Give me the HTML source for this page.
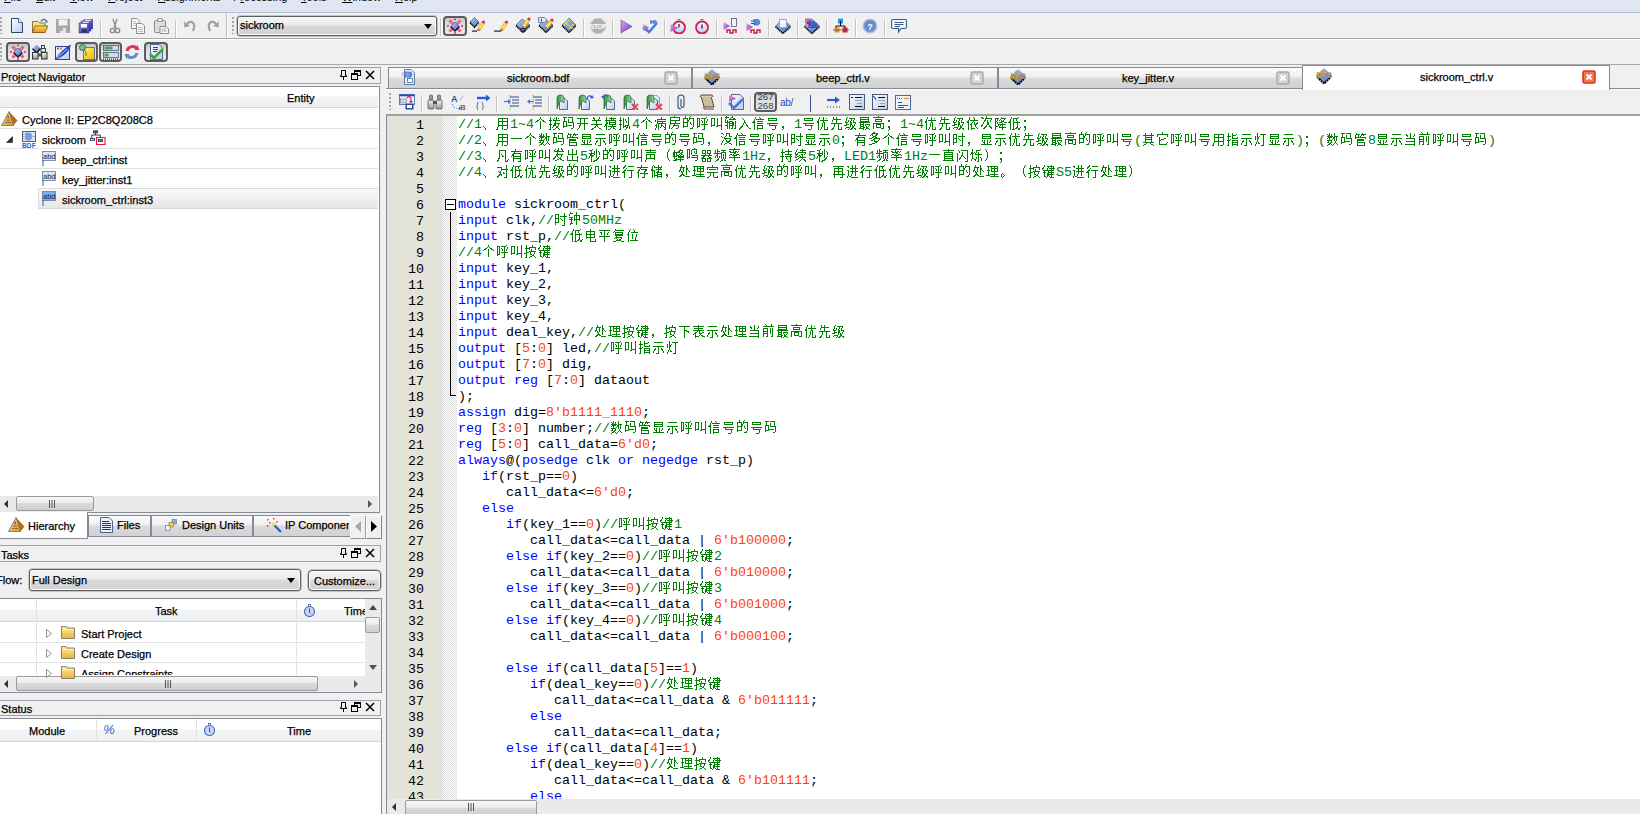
<!DOCTYPE html>
<html><head><meta charset="utf-8"><title>Quartus II - sickroom_ctrl.v</title>
<style>
*{box-sizing:border-box}
html,body{margin:0;padding:0}
body{width:1640px;height:814px;overflow:hidden;position:relative;background:#f0f0f0;font-family:"Liberation Sans",sans-serif;font-size:11px;color:#000}
.a{position:absolute}
.t{position:absolute;white-space:nowrap;line-height:13px;-webkit-text-stroke:.25px #000}
/* menubar */
#menu{left:0;top:0;width:1640px;height:13px;background:linear-gradient(#e3e7f3,#dde3f1);border-bottom:1px solid #b7bfd2}
#menu span{position:absolute;top:-9px;line-height:13px;font-size:11px}
#menu u{text-decoration:underline}
/* toolbars */
.hl{position:absolute;height:1px}
.vl{position:absolute;width:1px}
.sep{position:absolute;width:1px;background:#c5c5c5;border-right:1px solid #fff;width:2px}
.grip{position:absolute;width:2px;background-image:linear-gradient(#a4a4a4 0 2px,transparent 2px);background-size:2px 4px;background-repeat:repeat-y}
.pbtn{position:absolute;border:2px solid #5c5c5c;border-radius:4px;background:linear-gradient(#c8c8c8,#dedede 40%,#e9e9e9)}
.combo{position:absolute;border:1px solid #5e5e5e;box-shadow:inset 0 0 0 1px #fbfbfb,0 0 0 .5px #9a9a9a;border-radius:3px;background:linear-gradient(#f4f4f4 0,#ececec 45%,#d9d9d9 50%,#d2d2d2 100%)}
.arr{position:absolute;width:0;height:0;border-left:4px solid transparent;border-right:4px solid transparent;border-top:5px solid #000}
/* dock header */
.dock{position:absolute;border:1px solid #9da1a8;background:#f0f0f0}
.dicons{position:absolute}
/* tree */
.frame{position:absolute;border:1px solid #858a96;background:#fff}
.hdr{position:absolute;background:linear-gradient(#fff 0,#fff 45%,#f4f5f7 50%,#eceef1 100%);border-bottom:1px solid #d5d5d5}
.rowl{position:absolute;height:1px;background:#e3e3e3}
/* scrollbar */
.hsb{position:absolute;background:#eaeaea}
.thumb{position:absolute;border:1px solid #9a9a9a;border-radius:2px;background:linear-gradient(#f7f7f7 0,#ececec 45%,#dadada 50%,#cfcfcf 100%)}
/* editor */
#gutter{left:387px;top:116px;width:56px;height:683px;background:#e4e3da}
#dots{left:443px;top:116px;width:14px;height:683px;background-color:#fff;background-image:linear-gradient(45deg,#dcdcdc 25%,transparent 25%,transparent 75%,#dcdcdc 75%),linear-gradient(45deg,#dcdcdc 25%,transparent 25%,transparent 75%,#dcdcdc 75%);background-size:2px 2px;background-position:0 0,1px 1px}
#code{left:387px;top:115px;width:1253px;height:684px;overflow:hidden}
.cl{position:absolute;left:71px;height:16px;line-height:16px;white-space:pre;font-family:"Liberation Mono",monospace;font-size:13.333px;color:#000}
.ln{position:absolute;margin-top:1px;left:0;width:37px;text-align:right;height:16px;line-height:16px;font-family:"Liberation Mono",monospace;font-size:13.333px;color:#000}
.cl i{font-style:normal}
.k{color:#0000ff}.n{color:#ff4500}.c{color:#008000}
svg.cj{display:inline-block;width:14px;height:16px;vertical-align:top;fill:currentColor;shape-rendering:crispEdges;overflow:visible}
/* tabs */
.tab{position:absolute;border:1px solid #858a96;border-bottom:none;background:linear-gradient(#fbfbfb 0,#efefef 45%,#dadada 50%,#d2d2d2 100%)}
.tabx{position:absolute;width:14px;height:14px;border:2px solid #a9a9a9;border-radius:3px;background:#d8d8d8}

</style></head><body>
<svg width="0" height="0" style="position:absolute"><defs><symbol id="g3001" overflow="visible" viewBox="0 0 14 16"><path d="M1 9h1v1h-1zM2 10h1v1h-1zM3 11h1v1h-1zM3 12h1v1h-1z"/></symbol><symbol id="g7528" overflow="visible" viewBox="0 0 14 16"><path d="M2 1h10v1h-10zM2 2h1v1h-1zM6 2h1v1h-1zM11 2h1v1h-1zM2 3h1v1h-1zM6 3h1v1h-1zM11 3h1v1h-1zM2 4h10v1h-10zM2 5h1v1h-1zM6 5h1v1h-1zM11 5h1v1h-1zM2 6h1v1h-1zM6 6h1v1h-1zM11 6h1v1h-1zM2 7h1v1h-1zM6 7h1v1h-1zM11 7h1v1h-1zM2 8h10v1h-10zM2 9h1v1h-1zM6 9h1v1h-1zM11 9h1v1h-1zM1 10h1v1h-1zM6 10h1v1h-1zM11 10h1v1h-1zM1 11h1v1h-1zM6 11h1v1h-1zM11 11h1v1h-1zM0 12h2v1h-2zM6 12h1v1h-1zM8 12h3v1h-3z"/></symbol><symbol id="g4e2a" overflow="visible" viewBox="0 0 14 16"><path d="M6 0h1v1h-1zM6 1h1v1h-1zM5 2h1v1h-1zM7 2h1v1h-1zM3 3h2v1h-2zM8 3h2v1h-2zM2 4h2v1h-2zM6 4h1v1h-1zM9 4h2v1h-2zM1 5h1v1h-1zM6 5h1v1h-1zM11 5h1v1h-1zM6 6h1v1h-1zM6 7h1v1h-1zM6 8h1v1h-1zM6 9h1v1h-1zM6 10h1v1h-1zM6 11h1v1h-1z"/></symbol><symbol id="g62e8" overflow="visible" viewBox="0 0 14 16"><path d="M2 0h1v1h-1zM8 0h1v1h-1zM2 1h1v1h-1zM6 1h1v1h-1zM8 1h1v1h-1zM10 1h1v1h-1zM2 2h1v1h-1zM5 2h1v1h-1zM8 2h1v1h-1zM1 3h3v1h-3zM5 3h7v1h-7zM2 4h1v1h-1zM7 4h1v1h-1zM2 5h1v1h-1zM7 5h1v1h-1zM2 6h1v1h-1zM6 6h6v1h-6zM1 7h3v1h-3zM6 7h2v1h-2zM10 7h1v1h-1zM2 8h1v1h-1zM5 8h3v1h-3zM10 8h1v1h-1zM2 9h1v1h-1zM5 9h1v1h-1zM8 9h2v1h-2zM2 10h1v1h-1zM4 10h1v1h-1zM8 10h2v1h-2zM2 11h1v1h-1zM7 11h1v1h-1zM10 11h1v1h-1zM1 12h2v1h-2zM5 12h2v1h-2zM11 12h1v1h-1z"/></symbol><symbol id="g7801" overflow="visible" viewBox="0 0 14 16"><path d="M1 0h4v1h-4zM6 0h5v1h-5zM2 1h1v1h-1zM10 1h1v1h-1zM2 2h1v1h-1zM6 2h1v1h-1zM10 2h1v1h-1zM2 3h1v1h-1zM6 3h1v1h-1zM10 3h1v1h-1zM1 4h4v1h-4zM6 4h1v1h-1zM10 4h1v1h-1zM1 5h1v1h-1zM4 5h1v1h-1zM6 5h6v1h-6zM1 6h1v1h-1zM4 6h1v1h-1zM11 6h1v1h-1zM1 7h1v1h-1zM4 7h1v1h-1zM11 7h1v1h-1zM1 8h1v1h-1zM4 8h6v1h-6zM11 8h1v1h-1zM1 9h4v1h-4zM11 9h1v1h-1zM1 10h1v1h-1zM11 10h1v1h-1zM9 11h2v1h-2z"/></symbol><symbol id="g5f00" overflow="visible" viewBox="0 0 14 16"><path d="M1 1h11v1h-11zM4 2h1v1h-1zM8 2h1v1h-1zM4 3h1v1h-1zM8 3h1v1h-1zM4 4h1v1h-1zM8 4h1v1h-1zM4 5h1v1h-1zM8 5h1v1h-1zM1 6h11v1h-11zM4 7h1v1h-1zM8 7h1v1h-1zM3 8h2v1h-2zM8 8h1v1h-1zM3 9h1v1h-1zM8 9h1v1h-1zM3 10h1v1h-1zM8 10h1v1h-1zM2 11h1v1h-1zM8 11h1v1h-1zM1 12h1v1h-1zM8 12h1v1h-1z"/></symbol><symbol id="g5173" overflow="visible" viewBox="0 0 14 16"><path d="M3 0h1v1h-1zM9 0h1v1h-1zM3 1h2v1h-2zM9 1h1v1h-1zM4 2h1v1h-1zM8 2h1v1h-1zM2 3h9v1h-9zM6 4h1v1h-1zM6 5h1v1h-1zM6 6h1v1h-1zM1 7h11v1h-11zM6 8h2v1h-2zM5 9h1v1h-1zM7 9h1v1h-1zM4 10h2v1h-2zM8 10h1v1h-1zM2 11h2v1h-2zM9 11h2v1h-2zM1 12h2v1h-2zM11 12h1v1h-1z"/></symbol><symbol id="g6a21" overflow="visible" viewBox="0 0 14 16"><path d="M2 0h1v1h-1zM7 0h1v1h-1zM2 1h1v1h-1zM5 1h7v1h-7zM2 2h1v1h-1zM7 2h1v1h-1zM9 2h1v1h-1zM1 3h11v1h-11zM2 4h1v1h-1zM5 4h1v1h-1zM11 4h1v1h-1zM2 5h2v1h-2zM5 5h7v1h-7zM2 6h2v1h-2zM5 6h1v1h-1zM11 6h1v1h-1zM1 7h2v1h-2zM5 7h7v1h-7zM1 8h2v1h-2zM8 8h1v1h-1zM0 9h1v1h-1zM2 9h1v1h-1zM4 9h8v1h-8zM2 10h1v1h-1zM7 10h1v1h-1zM9 10h1v1h-1zM2 11h1v1h-1zM6 11h1v1h-1zM9 11h2v1h-2zM2 12h1v1h-1zM4 12h2v1h-2zM11 12h1v1h-1z"/></symbol><symbol id="g62df" overflow="visible" viewBox="0 0 14 16"><path d="M2 0h1v1h-1zM10 0h1v1h-1zM2 1h1v1h-1zM5 1h1v1h-1zM10 1h1v1h-1zM2 2h1v1h-1zM5 2h1v1h-1zM7 2h1v1h-1zM10 2h1v1h-1zM1 3h3v1h-3zM5 3h1v1h-1zM7 3h1v1h-1zM10 3h1v1h-1zM2 4h1v1h-1zM5 4h1v1h-1zM8 4h1v1h-1zM10 4h1v1h-1zM2 5h1v1h-1zM5 5h1v1h-1zM8 5h1v1h-1zM10 5h1v1h-1zM2 6h1v1h-1zM5 6h1v1h-1zM10 6h1v1h-1zM1 7h3v1h-3zM5 7h1v1h-1zM10 7h1v1h-1zM2 8h1v1h-1zM5 8h1v1h-1zM7 8h4v1h-4zM2 9h1v1h-1zM5 9h3v1h-3zM9 9h1v1h-1zM11 9h1v1h-1zM2 10h1v1h-1zM5 10h1v1h-1zM8 10h2v1h-2zM11 10h1v1h-1zM2 11h1v1h-1zM8 11h1v1h-1zM11 11h1v1h-1zM1 12h2v1h-2zM7 12h1v1h-1z"/></symbol><symbol id="g75c5" overflow="visible" viewBox="0 0 14 16"><path d="M7 0h1v1h-1zM7 1h1v1h-1zM3 2h9v1h-9zM1 3h1v1h-1zM3 3h1v1h-1zM1 4h1v1h-1zM3 4h9v1h-9zM3 5h1v1h-1zM8 5h1v1h-1zM3 6h9v1h-9zM2 7h1v1h-1zM4 7h1v1h-1zM7 7h1v1h-1zM11 7h1v1h-1zM1 8h2v1h-2zM4 8h1v1h-1zM7 8h2v1h-2zM11 8h1v1h-1zM2 9h1v1h-1zM4 9h1v1h-1zM7 9h1v1h-1zM9 9h1v1h-1zM11 9h1v1h-1zM2 10h1v1h-1zM4 10h1v1h-1zM6 10h1v1h-1zM10 10h2v1h-2zM1 11h1v1h-1zM4 11h1v1h-1zM11 11h1v1h-1zM1 12h1v1h-1zM4 12h1v1h-1zM10 12h2v1h-2z"/></symbol><symbol id="g623f" overflow="visible" viewBox="0 0 14 16"><path d="M6 -1h1v1h-1zM2 0h10v1h-10zM2 1h1v1h-1zM11 1h1v1h-1zM2 2h1v1h-1zM11 2h1v1h-1zM2 3h10v1h-10zM2 4h1v1h-1zM7 4h1v1h-1zM2 5h1v1h-1zM7 5h1v1h-1zM2 6h10v1h-10zM2 7h1v1h-1zM6 7h1v1h-1zM1 8h1v1h-1zM5 8h6v1h-6zM1 9h1v1h-1zM5 9h1v1h-1zM10 9h1v1h-1zM1 10h1v1h-1zM4 10h1v1h-1zM10 10h1v1h-1zM1 11h1v1h-1zM3 11h1v1h-1zM8 11h2v1h-2z"/></symbol><symbol id="g7684" overflow="visible" viewBox="0 0 14 16"><path d="M3 -1h1v1h-1zM8 -1h1v1h-1zM3 0h1v1h-1zM7 0h1v1h-1zM1 1h5v1h-5zM7 1h5v1h-5zM1 2h1v1h-1zM5 2h1v1h-1zM7 2h1v1h-1zM11 2h1v1h-1zM1 3h1v1h-1zM5 3h2v1h-2zM11 3h1v1h-1zM1 4h1v1h-1zM5 4h2v1h-2zM11 4h1v1h-1zM1 5h5v1h-5zM8 5h1v1h-1zM11 5h1v1h-1zM1 6h1v1h-1zM5 6h1v1h-1zM8 6h1v1h-1zM11 6h1v1h-1zM1 7h1v1h-1zM5 7h1v1h-1zM9 7h1v1h-1zM11 7h1v1h-1zM1 8h1v1h-1zM5 8h1v1h-1zM11 8h1v1h-1zM1 9h5v1h-5zM11 9h1v1h-1zM1 10h1v1h-1zM10 10h1v1h-1zM8 11h3v1h-3z"/></symbol><symbol id="g547c" overflow="visible" viewBox="0 0 14 16"><path d="M10 0h1v1h-1zM1 1h3v1h-3zM5 1h5v1h-5zM1 2h1v1h-1zM3 2h1v1h-1zM8 2h1v1h-1zM11 2h1v1h-1zM1 3h1v1h-1zM3 3h1v1h-1zM5 3h1v1h-1zM8 3h1v1h-1zM11 3h1v1h-1zM1 4h1v1h-1zM3 4h1v1h-1zM6 4h1v1h-1zM8 4h1v1h-1zM10 4h1v1h-1zM1 5h1v1h-1zM3 5h1v1h-1zM6 5h1v1h-1zM8 5h1v1h-1zM10 5h1v1h-1zM1 6h1v1h-1zM3 6h1v1h-1zM8 6h1v1h-1zM1 7h1v1h-1zM3 7h1v1h-1zM5 7h7v1h-7zM1 8h1v1h-1zM3 8h1v1h-1zM8 8h1v1h-1zM1 9h3v1h-3zM8 9h1v1h-1zM1 10h1v1h-1zM8 10h1v1h-1zM8 11h1v1h-1zM6 12h3v1h-3z"/></symbol><symbol id="g53eb" overflow="visible" viewBox="0 0 14 16"><path d="M11 0h1v1h-1zM1 1h4v1h-4zM7 1h1v1h-1zM11 1h1v1h-1zM1 2h1v1h-1zM4 2h1v1h-1zM7 2h1v1h-1zM11 2h1v1h-1zM1 3h1v1h-1zM4 3h1v1h-1zM7 3h1v1h-1zM11 3h1v1h-1zM1 4h1v1h-1zM4 4h1v1h-1zM7 4h1v1h-1zM11 4h1v1h-1zM1 5h1v1h-1zM4 5h1v1h-1zM7 5h1v1h-1zM11 5h1v1h-1zM1 6h1v1h-1zM4 6h1v1h-1zM7 6h1v1h-1zM11 6h1v1h-1zM1 7h1v1h-1zM4 7h1v1h-1zM7 7h1v1h-1zM11 7h1v1h-1zM1 8h4v1h-4zM7 8h5v1h-5zM1 9h1v1h-1zM6 9h2v1h-2zM11 9h1v1h-1zM11 10h1v1h-1zM11 11h1v1h-1zM11 12h1v1h-1z"/></symbol><symbol id="g8f93" overflow="visible" viewBox="0 0 14 16"><path d="M2 -1h1v1h-1zM8 -1h1v1h-1zM1 0h4v1h-4zM7 0h2v1h-2zM2 1h1v1h-1zM6 1h1v1h-1zM9 1h2v1h-2zM1 2h1v1h-1zM5 2h7v1h-7zM1 3h1v1h-1zM3 3h1v1h-1zM1 4h1v1h-1zM3 4h1v1h-1zM5 4h4v1h-4zM11 4h1v1h-1zM1 5h5v1h-5zM8 5h2v1h-2zM11 5h1v1h-1zM3 6h1v1h-1zM5 6h5v1h-5zM11 6h1v1h-1zM3 7h1v1h-1zM5 7h1v1h-1zM8 7h2v1h-2zM11 7h1v1h-1zM1 8h3v1h-3zM5 8h5v1h-5zM11 8h1v1h-1zM3 9h1v1h-1zM5 9h1v1h-1zM8 9h1v1h-1zM11 9h1v1h-1zM3 10h1v1h-1zM5 10h1v1h-1zM8 10h1v1h-1zM11 10h1v1h-1zM3 11h1v1h-1zM5 11h1v1h-1zM7 11h2v1h-2zM10 11h2v1h-2z"/></symbol><symbol id="g5165" overflow="visible" viewBox="0 0 14 16"><path d="M4 1h1v1h-1zM5 2h1v1h-1zM6 3h1v1h-1zM6 4h1v1h-1zM6 5h2v1h-2zM5 6h1v1h-1zM7 6h1v1h-1zM5 7h1v1h-1zM8 7h1v1h-1zM4 8h1v1h-1zM8 8h2v1h-2zM3 9h2v1h-2zM9 9h1v1h-1zM2 10h2v1h-2zM10 10h1v1h-1zM1 11h2v1h-2zM11 11h2v1h-2zM1 12h1v1h-1z"/></symbol><symbol id="g4fe1" overflow="visible" viewBox="0 0 14 16"><path d="M3 0h1v1h-1zM7 0h1v1h-1zM3 1h1v1h-1zM8 1h1v1h-1zM2 2h1v1h-1zM4 2h8v1h-8zM2 3h1v1h-1zM1 4h2v1h-2zM5 4h6v1h-6zM0 5h3v1h-3zM2 6h1v1h-1zM5 6h6v1h-6zM2 7h1v1h-1zM2 8h1v1h-1zM5 8h6v1h-6zM2 9h1v1h-1zM5 9h1v1h-1zM10 9h1v1h-1zM2 10h1v1h-1zM5 10h1v1h-1zM10 10h1v1h-1zM2 11h1v1h-1zM5 11h6v1h-6zM2 12h1v1h-1zM5 12h1v1h-1z"/></symbol><symbol id="g53f7" overflow="visible" viewBox="0 0 14 16"><path d="M2 1h9v1h-9zM2 2h1v1h-1zM10 2h1v1h-1zM2 3h9v1h-9zM1 6h11v1h-11zM3 7h1v1h-1zM3 8h8v1h-8zM9 9h1v1h-1zM9 10h1v1h-1zM9 11h1v1h-1zM6 12h3v1h-3z"/></symbol><symbol id="gff0c" overflow="visible" viewBox="0 0 14 16"><path d="M2 9h2v1h-2zM2 10h2v1h-2zM3 11h1v1h-1zM2 12h1v1h-1z"/></symbol><symbol id="g4f18" overflow="visible" viewBox="0 0 14 16"><path d="M3 0h1v1h-1zM7 0h1v1h-1zM3 1h1v1h-1zM7 1h1v1h-1zM10 1h1v1h-1zM2 2h1v1h-1zM7 2h1v1h-1zM2 3h1v1h-1zM4 3h8v1h-8zM1 4h2v1h-2zM7 4h1v1h-1zM1 5h2v1h-2zM7 5h2v1h-2zM2 6h1v1h-1zM6 6h1v1h-1zM8 6h1v1h-1zM2 7h1v1h-1zM6 7h1v1h-1zM8 7h1v1h-1zM2 8h1v1h-1zM6 8h1v1h-1zM8 8h1v1h-1zM2 9h1v1h-1zM6 9h1v1h-1zM8 9h1v1h-1zM2 10h1v1h-1zM5 10h1v1h-1zM8 10h1v1h-1zM11 10h1v1h-1zM2 11h1v1h-1zM5 11h1v1h-1zM8 11h1v1h-1zM11 11h1v1h-1zM2 12h1v1h-1zM4 12h1v1h-1zM8 12h4v1h-4z"/></symbol><symbol id="g5148" overflow="visible" viewBox="0 0 14 16"><path d="M3 0h1v1h-1zM6 0h1v1h-1zM3 1h1v1h-1zM6 1h1v1h-1zM3 2h8v1h-8zM2 3h1v1h-1zM6 3h1v1h-1zM2 4h1v1h-1zM6 4h1v1h-1zM6 5h1v1h-1zM1 6h11v1h-11zM4 7h1v1h-1zM8 7h1v1h-1zM4 8h1v1h-1zM8 8h1v1h-1zM4 9h1v1h-1zM8 9h1v1h-1zM3 10h1v1h-1zM8 10h1v1h-1zM11 10h1v1h-1zM2 11h2v1h-2zM8 11h1v1h-1zM11 11h1v1h-1zM1 12h2v1h-2zM8 12h4v1h-4z"/></symbol><symbol id="g7ea7" overflow="visible" viewBox="0 0 14 16"><path d="M3 0h1v1h-1zM2 1h1v1h-1zM5 1h6v1h-6zM2 2h1v1h-1zM7 2h1v1h-1zM10 2h1v1h-1zM2 3h1v1h-1zM4 3h1v1h-1zM7 3h1v1h-1zM9 3h1v1h-1zM1 4h1v1h-1zM4 4h1v1h-1zM6 4h1v1h-1zM9 4h1v1h-1zM1 5h3v1h-3zM6 5h2v1h-2zM9 5h3v1h-3zM2 6h1v1h-1zM6 6h2v1h-2zM11 6h1v1h-1zM2 7h3v1h-3zM6 7h2v1h-2zM10 7h1v1h-1zM0 8h3v1h-3zM6 8h1v1h-1zM8 8h1v1h-1zM10 8h1v1h-1zM6 9h1v1h-1zM8 9h2v1h-2zM2 10h4v1h-4zM8 10h2v1h-2zM1 11h1v1h-1zM5 11h1v1h-1zM7 11h2v1h-2zM10 11h2v1h-2zM4 12h1v1h-1zM6 12h2v1h-2zM11 12h1v1h-1z"/></symbol><symbol id="g6700" overflow="visible" viewBox="0 0 14 16"><path d="M2 0h9v1h-9zM2 1h1v1h-1zM10 1h1v1h-1zM2 2h9v1h-9zM2 3h1v1h-1zM10 3h1v1h-1zM2 4h9v1h-9zM1 5h11v1h-11zM2 6h1v1h-1zM5 6h1v1h-1zM2 7h4v1h-4zM7 7h5v1h-5zM2 8h1v1h-1zM5 8h1v1h-1zM7 8h1v1h-1zM11 8h1v1h-1zM2 9h4v1h-4zM8 9h1v1h-1zM10 9h1v1h-1zM2 10h1v1h-1zM5 10h2v1h-2zM8 10h2v1h-2zM1 11h5v1h-5zM8 11h3v1h-3zM5 12h1v1h-1zM7 12h1v1h-1zM11 12h1v1h-1z"/></symbol><symbol id="g9ad8" overflow="visible" viewBox="0 0 14 16"><path d="M6 -1h1v1h-1zM1 0h11v1h-11zM3 2h7v1h-7zM3 3h1v1h-1zM9 3h1v1h-1zM3 4h7v1h-7zM1 6h11v1h-11zM1 7h1v1h-1zM4 7h5v1h-5zM11 7h1v1h-1zM1 8h1v1h-1zM4 8h1v1h-1zM8 8h1v1h-1zM11 8h1v1h-1zM1 9h1v1h-1zM4 9h1v1h-1zM8 9h1v1h-1zM11 9h1v1h-1zM1 10h1v1h-1zM4 10h5v1h-5zM11 10h1v1h-1zM1 11h1v1h-1zM9 11h3v1h-3z"/></symbol><symbol id="gff1b" overflow="visible" viewBox="0 0 14 16"><path d="M2 3h2v1h-2zM2 4h2v1h-2zM2 9h2v1h-2zM2 10h2v1h-2zM3 11h1v1h-1zM3 12h1v1h-1zM2 13h1v1h-1z"/></symbol><symbol id="g4f9d" overflow="visible" viewBox="0 0 14 16"><path d="M3 0h1v1h-1zM7 0h1v1h-1zM3 1h1v1h-1zM8 1h1v1h-1zM3 2h1v1h-1zM8 2h1v1h-1zM2 3h1v1h-1zM4 3h8v1h-8zM1 4h2v1h-2zM7 4h1v1h-1zM1 5h2v1h-2zM6 5h1v1h-1zM8 5h1v1h-1zM11 5h1v1h-1zM2 6h1v1h-1zM5 6h1v1h-1zM8 6h1v1h-1zM10 6h2v1h-2zM2 7h1v1h-1zM4 7h2v1h-2zM8 7h3v1h-3zM2 8h1v1h-1zM5 8h1v1h-1zM9 8h1v1h-1zM2 9h1v1h-1zM5 9h1v1h-1zM9 9h1v1h-1zM2 10h1v1h-1zM5 10h1v1h-1zM10 10h1v1h-1zM2 11h1v1h-1zM5 11h4v1h-4zM11 11h1v1h-1zM2 12h1v1h-1zM5 12h1v1h-1z"/></symbol><symbol id="g6b21" overflow="visible" viewBox="0 0 14 16"><path d="M6 -1h1v1h-1zM1 0h2v1h-2zM6 0h1v1h-1zM2 1h2v1h-2zM5 1h7v1h-7zM5 2h1v1h-1zM11 2h1v1h-1zM4 3h2v1h-2zM7 3h1v1h-1zM10 3h1v1h-1zM4 4h1v1h-1zM7 4h1v1h-1zM10 4h1v1h-1zM3 5h1v1h-1zM7 5h2v1h-2zM3 6h1v1h-1zM7 6h2v1h-2zM2 7h1v1h-1zM7 7h2v1h-2zM1 8h2v1h-2zM6 8h1v1h-1zM9 8h1v1h-1zM1 9h1v1h-1zM5 9h2v1h-2zM9 9h2v1h-2zM4 10h2v1h-2zM10 10h2v1h-2zM3 11h2v1h-2zM11 11h1v1h-1z"/></symbol><symbol id="g964d" overflow="visible" viewBox="0 0 14 16"><path d="M7 0h1v1h-1zM1 1h4v1h-4zM7 1h5v1h-5zM1 2h1v1h-1zM3 2h1v1h-1zM6 2h1v1h-1zM10 2h1v1h-1zM1 3h1v1h-1zM3 3h1v1h-1zM5 3h1v1h-1zM7 3h1v1h-1zM9 3h1v1h-1zM1 4h2v1h-2zM7 4h3v1h-3zM1 5h1v1h-1zM3 5h1v1h-1zM5 5h3v1h-3zM10 5h3v1h-3zM1 6h1v1h-1zM3 6h1v1h-1zM8 6h1v1h-1zM1 7h1v1h-1zM4 7h8v1h-8zM1 8h1v1h-1zM4 8h1v1h-1zM6 8h1v1h-1zM8 8h1v1h-1zM1 9h3v1h-3zM5 9h1v1h-1zM8 9h1v1h-1zM1 10h1v1h-1zM5 10h7v1h-7zM1 11h1v1h-1zM8 11h1v1h-1zM1 12h1v1h-1zM8 12h1v1h-1z"/></symbol><symbol id="g4f4e" overflow="visible" viewBox="0 0 14 16"><path d="M3 0h1v1h-1zM10 0h1v1h-1zM3 1h1v1h-1zM5 1h5v1h-5zM2 2h1v1h-1zM5 2h1v1h-1zM8 2h1v1h-1zM2 3h1v1h-1zM5 3h1v1h-1zM8 3h1v1h-1zM1 4h2v1h-2zM5 4h1v1h-1zM9 4h1v1h-1zM0 5h3v1h-3zM5 5h7v1h-7zM2 6h1v1h-1zM5 6h1v1h-1zM9 6h1v1h-1zM2 7h1v1h-1zM5 7h1v1h-1zM9 7h1v1h-1zM2 8h1v1h-1zM5 8h1v1h-1zM9 8h1v1h-1zM2 9h1v1h-1zM5 9h1v1h-1zM9 9h1v1h-1zM2 10h1v1h-1zM5 10h1v1h-1zM8 10h2v1h-2zM12 10h1v1h-1zM2 11h1v1h-1zM5 11h1v1h-1zM7 11h2v1h-2zM10 11h2v1h-2zM2 12h1v1h-1zM4 12h3v1h-3zM10 12h2v1h-2z"/></symbol><symbol id="g4e00" overflow="visible" viewBox="0 0 14 16"><path d="M1 5h11v1h-11z"/></symbol><symbol id="g6570" overflow="visible" viewBox="0 0 14 16"><path d="M3 0h1v1h-1zM8 0h1v1h-1zM1 1h1v1h-1zM3 1h1v1h-1zM5 1h1v1h-1zM8 1h1v1h-1zM2 2h2v1h-2zM5 2h1v1h-1zM8 2h1v1h-1zM1 3h6v1h-6zM8 3h4v1h-4zM2 4h4v1h-4zM7 4h2v1h-2zM10 4h1v1h-1zM1 5h1v1h-1zM3 5h1v1h-1zM7 5h2v1h-2zM10 5h1v1h-1zM3 6h1v1h-1zM6 6h1v1h-1zM8 6h1v1h-1zM10 6h1v1h-1zM1 7h5v1h-5zM8 7h1v1h-1zM10 7h1v1h-1zM2 8h1v1h-1zM5 8h1v1h-1zM9 8h1v1h-1zM1 9h2v1h-2zM4 9h2v1h-2zM9 9h1v1h-1zM3 10h2v1h-2zM8 10h1v1h-1zM10 10h1v1h-1zM2 11h2v1h-2zM5 11h1v1h-1zM7 11h1v1h-1zM11 11h1v1h-1zM1 12h1v1h-1zM6 12h1v1h-1z"/></symbol><symbol id="g7ba1" overflow="visible" viewBox="0 0 14 16"><path d="M2 0h1v1h-1zM8 0h1v1h-1zM2 1h4v1h-4zM7 1h5v1h-5zM1 2h1v1h-1zM4 2h1v1h-1zM7 2h1v1h-1zM9 2h1v1h-1zM1 3h1v1h-1zM4 3h1v1h-1zM6 3h1v1h-1zM1 4h11v1h-11zM1 5h1v1h-1zM11 5h1v1h-1zM3 6h7v1h-7zM3 7h7v1h-7zM3 8h1v1h-1zM3 9h8v1h-8zM3 10h1v1h-1zM10 10h1v1h-1zM3 11h1v1h-1zM10 11h1v1h-1zM3 12h8v1h-8z"/></symbol><symbol id="g663e" overflow="visible" viewBox="0 0 14 16"><path d="M2 1h9v1h-9zM2 2h1v1h-1zM10 2h1v1h-1zM2 3h9v1h-9zM2 4h1v1h-1zM10 4h1v1h-1zM2 5h9v1h-9zM2 7h1v1h-1zM4 7h1v1h-1zM7 7h1v1h-1zM10 7h1v1h-1zM2 8h1v1h-1zM4 8h1v1h-1zM7 8h1v1h-1zM10 8h1v1h-1zM3 9h2v1h-2zM7 9h1v1h-1zM9 9h1v1h-1zM4 10h1v1h-1zM7 10h1v1h-1zM1 11h11v1h-11z"/></symbol><symbol id="g793a" overflow="visible" viewBox="0 0 14 16"><path d="M2 1h9v1h-9zM1 5h11v1h-11zM6 6h1v1h-1zM3 7h1v1h-1zM6 7h1v1h-1zM9 7h1v1h-1zM2 8h2v1h-2zM6 8h1v1h-1zM9 8h2v1h-2zM2 9h1v1h-1zM6 9h1v1h-1zM10 9h1v1h-1zM1 10h1v1h-1zM6 10h1v1h-1zM11 10h1v1h-1zM1 11h1v1h-1zM6 11h1v1h-1zM11 11h1v1h-1zM4 12h3v1h-3z"/></symbol><symbol id="g6ca1" overflow="visible" viewBox="0 0 14 16"><path d="M1 0h2v1h-2zM6 0h4v1h-4zM3 1h1v1h-1zM6 1h1v1h-1zM9 1h1v1h-1zM6 2h1v1h-1zM9 2h1v1h-1zM1 3h1v1h-1zM5 3h1v1h-1zM9 3h3v1h-3zM2 4h1v1h-1zM4 4h1v1h-1zM4 5h7v1h-7zM5 6h1v1h-1zM10 6h1v1h-1zM3 7h1v1h-1zM6 7h1v1h-1zM9 7h2v1h-2zM2 8h1v1h-1zM6 8h4v1h-4zM2 9h1v1h-1zM7 9h2v1h-2zM1 10h1v1h-1zM5 10h2v1h-2zM9 10h2v1h-2zM1 11h1v1h-1zM4 11h1v1h-1zM11 11h1v1h-1z"/></symbol><symbol id="g65f6" overflow="visible" viewBox="0 0 14 16"><path d="M10 0h1v1h-1zM1 1h4v1h-4zM10 1h1v1h-1zM1 2h1v1h-1zM4 2h1v1h-1zM10 2h1v1h-1zM1 3h1v1h-1zM4 3h1v1h-1zM6 3h7v1h-7zM1 4h1v1h-1zM4 4h1v1h-1zM10 4h1v1h-1zM1 5h4v1h-4zM6 5h1v1h-1zM10 5h1v1h-1zM1 6h1v1h-1zM4 6h1v1h-1zM7 6h1v1h-1zM10 6h1v1h-1zM1 7h1v1h-1zM4 7h1v1h-1zM8 7h1v1h-1zM10 7h1v1h-1zM1 8h1v1h-1zM4 8h1v1h-1zM10 8h1v1h-1zM1 9h4v1h-4zM10 9h1v1h-1zM1 10h1v1h-1zM10 10h1v1h-1zM1 11h1v1h-1zM10 11h1v1h-1zM8 12h3v1h-3z"/></symbol><symbol id="g6709" overflow="visible" viewBox="0 0 14 16"><path d="M5 0h1v1h-1zM5 1h1v1h-1zM1 2h11v1h-11zM4 3h1v1h-1zM3 4h8v1h-8zM2 5h2v1h-2zM10 5h1v1h-1zM2 6h2v1h-2zM10 6h1v1h-1zM1 7h1v1h-1zM3 7h8v1h-8zM3 8h1v1h-1zM10 8h1v1h-1zM3 9h8v1h-8zM3 10h1v1h-1zM10 10h1v1h-1zM3 11h1v1h-1zM10 11h1v1h-1zM3 12h1v1h-1zM8 12h3v1h-3z"/></symbol><symbol id="g591a" overflow="visible" viewBox="0 0 14 16"><path d="M5 -1h2v1h-2zM4 0h6v1h-6zM3 1h2v1h-2zM8 1h2v1h-2zM2 2h1v1h-1zM4 2h1v1h-1zM7 2h2v1h-2zM5 3h3v1h-3zM4 4h2v1h-2zM7 4h2v1h-2zM1 5h3v1h-3zM6 5h6v1h-6zM5 6h2v1h-2zM11 6h1v1h-1zM3 7h2v1h-2zM6 7h1v1h-1zM10 7h1v1h-1zM6 8h4v1h-4zM7 9h2v1h-2zM4 10h3v1h-3zM1 11h3v1h-3z"/></symbol><symbol id="g5176" overflow="visible" viewBox="0 0 14 16"><path d="M3 0h1v1h-1zM9 0h1v1h-1zM3 1h1v1h-1zM9 1h1v1h-1zM1 2h11v1h-11zM3 3h1v1h-1zM9 3h1v1h-1zM3 4h7v1h-7zM3 5h1v1h-1zM9 5h1v1h-1zM3 6h7v1h-7zM3 7h1v1h-1zM9 7h1v1h-1zM3 8h1v1h-1zM9 8h1v1h-1zM1 9h11v1h-11zM4 10h1v1h-1zM8 10h1v1h-1zM2 11h2v1h-2zM9 11h2v1h-2zM1 12h1v1h-1zM11 12h1v1h-1z"/></symbol><symbol id="g5b83" overflow="visible" viewBox="0 0 14 16"><path d="M6 -1h1v1h-1zM6 0h1v1h-1zM1 1h11v1h-11zM1 2h1v1h-1zM11 2h1v1h-1zM1 3h1v1h-1zM11 3h1v1h-1zM3 4h1v1h-1zM3 5h1v1h-1zM8 5h2v1h-2zM3 6h1v1h-1zM5 6h3v1h-3zM3 7h2v1h-2zM3 8h1v1h-1zM3 9h1v1h-1zM11 9h1v1h-1zM3 10h1v1h-1zM10 10h1v1h-1zM3 11h8v1h-8z"/></symbol><symbol id="g6307" overflow="visible" viewBox="0 0 14 16"><path d="M2 0h1v1h-1zM6 0h1v1h-1zM2 1h1v1h-1zM6 1h1v1h-1zM10 1h1v1h-1zM2 2h1v1h-1zM6 2h4v1h-4zM1 3h4v1h-4zM6 3h1v1h-1zM2 4h1v1h-1zM6 4h1v1h-1zM11 4h1v1h-1zM2 5h1v1h-1zM6 5h6v1h-6zM2 6h1v1h-1zM4 6h1v1h-1zM1 7h3v1h-3zM6 7h6v1h-6zM2 8h1v1h-1zM6 8h1v1h-1zM11 8h1v1h-1zM2 9h1v1h-1zM6 9h6v1h-6zM2 10h1v1h-1zM6 10h1v1h-1zM11 10h1v1h-1zM2 11h1v1h-1zM6 11h6v1h-6zM1 12h2v1h-2zM6 12h1v1h-1zM11 12h1v1h-1z"/></symbol><symbol id="g706f" overflow="visible" viewBox="0 0 14 16"><path d="M3 0h1v1h-1zM3 1h1v1h-1zM6 1h6v1h-6zM3 2h1v1h-1zM9 2h1v1h-1zM1 3h1v1h-1zM3 3h1v1h-1zM5 3h1v1h-1zM9 3h1v1h-1zM1 4h1v1h-1zM3 4h2v1h-2zM9 4h1v1h-1zM1 5h1v1h-1zM3 5h2v1h-2zM9 5h1v1h-1zM1 6h1v1h-1zM3 6h1v1h-1zM9 6h1v1h-1zM3 7h1v1h-1zM9 7h1v1h-1zM3 8h1v1h-1zM9 8h1v1h-1zM2 9h1v1h-1zM4 9h1v1h-1zM9 9h1v1h-1zM2 10h1v1h-1zM4 10h2v1h-2zM9 10h1v1h-1zM1 11h1v1h-1zM9 11h1v1h-1zM1 12h1v1h-1zM7 12h3v1h-3z"/></symbol><symbol id="g5f53" overflow="visible" viewBox="0 0 14 16"><path d="M6 0h1v1h-1zM2 1h1v1h-1zM6 1h1v1h-1zM10 1h1v1h-1zM2 2h2v1h-2zM6 2h1v1h-1zM10 2h1v1h-1zM3 3h1v1h-1zM6 3h1v1h-1zM9 3h1v1h-1zM6 4h1v1h-1zM2 5h9v1h-9zM10 6h1v1h-1zM10 7h1v1h-1zM2 8h9v1h-9zM10 9h1v1h-1zM10 10h1v1h-1zM1 11h10v1h-10zM10 12h1v1h-1z"/></symbol><symbol id="g524d" overflow="visible" viewBox="0 0 14 16"><path d="M3 -1h1v1h-1zM9 -1h1v1h-1zM4 0h1v1h-1zM9 0h1v1h-1zM1 1h11v1h-11zM1 3h5v1h-5zM8 3h1v1h-1zM10 3h1v1h-1zM1 4h1v1h-1zM5 4h1v1h-1zM8 4h1v1h-1zM10 4h1v1h-1zM1 5h1v1h-1zM5 5h1v1h-1zM8 5h1v1h-1zM10 5h1v1h-1zM1 6h5v1h-5zM8 6h1v1h-1zM10 6h1v1h-1zM1 7h1v1h-1zM5 7h1v1h-1zM8 7h1v1h-1zM10 7h1v1h-1zM1 8h5v1h-5zM8 8h1v1h-1zM10 8h1v1h-1zM1 9h1v1h-1zM5 9h1v1h-1zM10 9h1v1h-1zM1 10h1v1h-1zM5 10h1v1h-1zM10 10h1v1h-1zM1 11h1v1h-1zM4 11h2v1h-2zM9 11h2v1h-2z"/></symbol><symbol id="g51e1" overflow="visible" viewBox="0 0 14 16"><path d="M3 1h7v1h-7zM3 2h1v1h-1zM9 2h1v1h-1zM3 3h1v1h-1zM9 3h1v1h-1zM3 4h1v1h-1zM9 4h1v1h-1zM3 5h1v1h-1zM5 5h1v1h-1zM9 5h1v1h-1zM3 6h1v1h-1zM6 6h1v1h-1zM9 6h1v1h-1zM3 7h1v1h-1zM6 7h2v1h-2zM9 7h1v1h-1zM3 8h1v1h-1zM9 8h1v1h-1zM2 9h2v1h-2zM9 9h1v1h-1zM2 10h1v1h-1zM9 10h1v1h-1zM12 10h1v1h-1zM1 11h2v1h-2zM9 11h1v1h-1zM11 11h1v1h-1zM1 12h1v1h-1zM9 12h3v1h-3z"/></symbol><symbol id="g53d1" overflow="visible" viewBox="0 0 14 16"><path d="M6 -1h1v1h-1zM9 -1h1v1h-1zM3 0h1v1h-1zM6 0h1v1h-1zM9 0h2v1h-2zM2 1h1v1h-1zM5 1h2v1h-2zM10 1h1v1h-1zM2 2h10v1h-10zM5 3h1v1h-1zM5 4h1v1h-1zM4 5h7v1h-7zM4 6h2v1h-2zM9 6h1v1h-1zM3 7h1v1h-1zM5 7h1v1h-1zM9 7h1v1h-1zM2 8h2v1h-2zM6 8h1v1h-1zM8 8h1v1h-1zM1 9h2v1h-2zM7 9h2v1h-2zM1 10h1v1h-1zM5 10h2v1h-2zM8 10h2v1h-2zM3 11h2v1h-2zM10 11h2v1h-2z"/></symbol><symbol id="g51fa" overflow="visible" viewBox="0 0 14 16"><path d="M6 0h1v1h-1zM2 1h1v1h-1zM6 1h1v1h-1zM10 1h1v1h-1zM2 2h1v1h-1zM6 2h1v1h-1zM10 2h1v1h-1zM2 3h1v1h-1zM6 3h1v1h-1zM10 3h1v1h-1zM2 4h1v1h-1zM6 4h1v1h-1zM10 4h1v1h-1zM2 5h9v1h-9zM6 6h1v1h-1zM1 7h1v1h-1zM6 7h1v1h-1zM11 7h1v1h-1zM1 8h1v1h-1zM6 8h1v1h-1zM11 8h1v1h-1zM1 9h1v1h-1zM6 9h1v1h-1zM11 9h1v1h-1zM1 10h1v1h-1zM6 10h1v1h-1zM11 10h1v1h-1zM1 11h11v1h-11zM11 12h1v1h-1z"/></symbol><symbol id="g79d2" overflow="visible" viewBox="0 0 14 16"><path d="M4 0h1v1h-1zM8 0h1v1h-1zM1 1h3v1h-3zM8 1h1v1h-1zM3 2h1v1h-1zM6 2h1v1h-1zM8 2h1v1h-1zM10 2h1v1h-1zM3 3h1v1h-1zM6 3h1v1h-1zM8 3h1v1h-1zM11 3h1v1h-1zM1 4h6v1h-6zM8 4h1v1h-1zM11 4h1v1h-1zM2 5h2v1h-2zM6 5h1v1h-1zM8 5h1v1h-1zM11 5h1v1h-1zM2 6h4v1h-4zM8 6h1v1h-1zM1 7h1v1h-1zM3 7h2v1h-2zM8 7h1v1h-1zM11 7h1v1h-1zM1 8h1v1h-1zM3 8h1v1h-1zM8 8h1v1h-1zM10 8h1v1h-1zM0 9h1v1h-1zM3 9h1v1h-1zM9 9h2v1h-2zM3 10h1v1h-1zM8 10h2v1h-2zM3 11h1v1h-1zM6 11h3v1h-3zM3 12h1v1h-1zM5 12h2v1h-2z"/></symbol><symbol id="g58f0" overflow="visible" viewBox="0 0 14 16"><path d="M6 0h1v1h-1zM1 1h11v1h-11zM6 2h1v1h-1zM2 3h10v1h-10zM2 5h9v1h-9zM2 6h1v1h-1zM6 6h1v1h-1zM10 6h1v1h-1zM2 7h1v1h-1zM6 7h1v1h-1zM10 7h1v1h-1zM2 8h1v1h-1zM6 8h1v1h-1zM10 8h1v1h-1zM2 9h9v1h-9zM2 10h1v1h-1zM10 10h1v1h-1zM1 11h1v1h-1zM1 12h1v1h-1z"/></symbol><symbol id="gff08" overflow="visible" viewBox="0 0 14 16"><path d="M11 0h1v1h-1zM10 1h1v1h-1zM10 2h1v1h-1zM9 3h1v1h-1zM9 4h1v1h-1zM9 5h1v1h-1zM9 6h1v1h-1zM9 7h1v1h-1zM9 8h1v1h-1zM10 9h1v1h-1zM10 10h1v1h-1zM11 11h1v1h-1z"/></symbol><symbol id="g8702" overflow="visible" viewBox="0 0 14 16"><path d="M8 0h1v1h-1zM2 1h1v1h-1zM7 1h4v1h-4zM2 2h1v1h-1zM6 2h2v1h-2zM10 2h1v1h-1zM1 3h7v1h-7zM9 3h2v1h-2zM1 4h2v1h-2zM4 4h1v1h-1zM8 4h2v1h-2zM1 5h2v1h-2zM4 5h1v1h-1zM7 5h1v1h-1zM9 5h2v1h-2zM1 6h2v1h-2zM4 6h3v1h-3zM8 6h1v1h-1zM11 6h1v1h-1zM1 7h4v1h-4zM6 7h6v1h-6zM2 8h1v1h-1zM6 8h6v1h-6zM2 9h1v1h-1zM4 9h1v1h-1zM8 9h1v1h-1zM3 10h9v1h-9zM1 11h4v1h-4zM8 11h1v1h-1zM8 12h1v1h-1z"/></symbol><symbol id="g9e23" overflow="visible" viewBox="0 0 14 16"><path d="M8 -1h1v1h-1zM1 0h3v1h-3zM6 0h5v1h-5zM1 1h1v1h-1zM3 1h1v1h-1zM5 1h1v1h-1zM10 1h1v1h-1zM1 2h1v1h-1zM3 2h1v1h-1zM5 2h1v1h-1zM8 2h1v1h-1zM10 2h1v1h-1zM1 3h1v1h-1zM3 3h1v1h-1zM5 3h1v1h-1zM8 3h1v1h-1zM10 3h1v1h-1zM1 4h1v1h-1zM3 4h1v1h-1zM5 4h1v1h-1zM9 4h2v1h-2zM1 5h1v1h-1zM3 5h1v1h-1zM5 5h1v1h-1zM1 6h1v1h-1zM3 6h1v1h-1zM6 6h6v1h-6zM1 7h1v1h-1zM3 7h1v1h-1zM11 7h1v1h-1zM1 8h3v1h-3zM5 8h7v1h-7zM1 9h1v1h-1zM11 9h1v1h-1zM11 10h1v1h-1zM9 11h2v1h-2z"/></symbol><symbol id="g5668" overflow="visible" viewBox="0 0 14 16"><path d="M2 1h4v1h-4zM7 1h4v1h-4zM2 2h1v1h-1zM5 2h1v1h-1zM7 2h1v1h-1zM10 2h1v1h-1zM2 3h1v1h-1zM5 3h1v1h-1zM7 3h1v1h-1zM10 3h1v1h-1zM2 4h4v1h-4zM7 4h4v1h-4zM5 5h1v1h-1zM9 5h1v1h-1zM1 6h11v1h-11zM3 7h2v1h-2zM8 7h1v1h-1zM2 8h2v1h-2zM9 8h2v1h-2zM1 9h5v1h-5zM7 9h5v1h-5zM2 10h1v1h-1zM5 10h1v1h-1zM7 10h1v1h-1zM10 10h1v1h-1zM2 11h1v1h-1zM5 11h1v1h-1zM7 11h1v1h-1zM10 11h1v1h-1zM2 12h4v1h-4zM7 12h4v1h-4z"/></symbol><symbol id="g9891" overflow="visible" viewBox="0 0 14 16"><path d="M3 0h1v1h-1zM1 1h1v1h-1zM3 1h1v1h-1zM7 1h5v1h-5zM1 2h1v1h-1zM3 2h3v1h-3zM9 2h1v1h-1zM1 3h1v1h-1zM3 3h1v1h-1zM7 3h5v1h-5zM0 4h8v1h-8zM11 4h1v1h-1zM3 5h1v1h-1zM7 5h1v1h-1zM9 5h1v1h-1zM11 5h1v1h-1zM2 6h2v1h-2zM7 6h1v1h-1zM9 6h1v1h-1zM11 6h1v1h-1zM1 7h1v1h-1zM3 7h1v1h-1zM5 7h1v1h-1zM7 7h1v1h-1zM9 7h1v1h-1zM11 7h1v1h-1zM1 8h1v1h-1zM3 8h1v1h-1zM5 8h1v1h-1zM7 8h1v1h-1zM9 8h1v1h-1zM11 8h1v1h-1zM4 9h1v1h-1zM7 9h1v1h-1zM9 9h1v1h-1zM11 9h1v1h-1zM3 10h2v1h-2zM8 10h1v1h-1zM10 10h1v1h-1zM2 11h2v1h-2zM7 11h2v1h-2zM10 11h2v1h-2zM1 12h1v1h-1zM6 12h1v1h-1z"/></symbol><symbol id="g7387" overflow="visible" viewBox="0 0 14 16"><path d="M6 -1h1v1h-1zM1 0h11v1h-11zM5 1h1v1h-1zM1 2h2v1h-2zM5 2h1v1h-1zM7 2h2v1h-2zM10 2h1v1h-1zM2 3h6v1h-6zM9 3h1v1h-1zM6 4h2v1h-2zM2 5h2v1h-2zM5 5h1v1h-1zM8 5h3v1h-3zM1 6h1v1h-1zM4 6h5v1h-5zM11 6h1v1h-1zM6 7h1v1h-1zM1 8h11v1h-11zM6 9h1v1h-1zM6 10h1v1h-1zM6 11h1v1h-1z"/></symbol><symbol id="g6301" overflow="visible" viewBox="0 0 14 16"><path d="M2 0h1v1h-1zM8 0h1v1h-1zM2 1h1v1h-1zM8 1h1v1h-1zM2 2h1v1h-1zM5 2h7v1h-7zM1 3h4v1h-4zM8 3h1v1h-1zM2 4h1v1h-1zM8 4h1v1h-1zM2 5h1v1h-1zM5 5h7v1h-7zM2 6h1v1h-1zM10 6h1v1h-1zM0 7h4v1h-4zM5 7h7v1h-7zM2 8h1v1h-1zM6 8h1v1h-1zM10 8h1v1h-1zM2 9h1v1h-1zM6 9h1v1h-1zM10 9h1v1h-1zM2 10h1v1h-1zM7 10h1v1h-1zM10 10h1v1h-1zM2 11h1v1h-1zM10 11h1v1h-1zM1 12h2v1h-2zM8 12h3v1h-3z"/></symbol><symbol id="g7eed" overflow="visible" viewBox="0 0 14 16"><path d="M3 0h1v1h-1zM8 0h1v1h-1zM2 1h1v1h-1zM6 1h6v1h-6zM2 2h1v1h-1zM8 2h1v1h-1zM1 3h1v1h-1zM4 3h8v1h-8zM1 4h1v1h-1zM3 4h1v1h-1zM11 4h1v1h-1zM1 5h3v1h-3zM7 5h2v1h-2zM10 5h1v1h-1zM2 6h1v1h-1zM5 6h1v1h-1zM8 6h1v1h-1zM1 7h1v1h-1zM3 7h2v1h-2zM6 7h1v1h-1zM8 7h1v1h-1zM1 8h2v1h-2zM5 8h7v1h-7zM4 9h1v1h-1zM8 9h1v1h-1zM2 10h2v1h-2zM7 10h1v1h-1zM9 10h2v1h-2zM1 11h1v1h-1zM6 11h1v1h-1zM10 11h2v1h-2zM5 12h1v1h-1zM11 12h1v1h-1z"/></symbol><symbol id="g76f4" overflow="visible" viewBox="0 0 14 16"><path d="M6 0h1v1h-1zM1 1h11v1h-11zM6 2h1v1h-1zM2 3h9v1h-9zM2 4h1v1h-1zM10 4h1v1h-1zM2 5h9v1h-9zM2 6h1v1h-1zM10 6h1v1h-1zM2 7h9v1h-9zM2 8h1v1h-1zM10 8h1v1h-1zM2 9h9v1h-9zM2 10h1v1h-1zM10 10h1v1h-1zM1 11h11v1h-11z"/></symbol><symbol id="g95ea" overflow="visible" viewBox="0 0 14 16"><path d="M2 1h1v1h-1zM5 1h7v1h-7zM3 2h1v1h-1zM11 2h1v1h-1zM3 3h1v1h-1zM6 3h1v1h-1zM11 3h1v1h-1zM1 4h1v1h-1zM6 4h1v1h-1zM11 4h1v1h-1zM1 5h1v1h-1zM6 5h1v1h-1zM11 5h1v1h-1zM1 6h1v1h-1zM5 6h2v1h-2zM11 6h1v1h-1zM1 7h1v1h-1zM5 7h1v1h-1zM7 7h1v1h-1zM11 7h1v1h-1zM1 8h1v1h-1zM4 8h1v1h-1zM8 8h1v1h-1zM11 8h1v1h-1zM1 9h1v1h-1zM3 9h2v1h-2zM9 9h1v1h-1zM11 9h1v1h-1zM1 10h1v1h-1zM3 10h1v1h-1zM11 10h1v1h-1zM1 11h1v1h-1zM11 11h1v1h-1zM1 12h1v1h-1zM9 12h3v1h-3z"/></symbol><symbol id="g70c1" overflow="visible" viewBox="0 0 14 16"><path d="M2 0h1v1h-1zM10 0h1v1h-1zM2 1h1v1h-1zM6 1h4v1h-4zM2 2h1v1h-1zM6 2h1v1h-1zM1 3h2v1h-2zM4 3h1v1h-1zM6 3h1v1h-1zM8 3h1v1h-1zM1 4h3v1h-3zM5 4h1v1h-1zM8 4h1v1h-1zM0 5h1v1h-1zM2 5h1v1h-1zM5 5h7v1h-7zM2 6h1v1h-1zM8 6h1v1h-1zM2 7h1v1h-1zM8 7h1v1h-1zM2 8h1v1h-1zM6 8h1v1h-1zM8 8h1v1h-1zM10 8h1v1h-1zM2 9h2v1h-2zM6 9h1v1h-1zM8 9h1v1h-1zM11 9h1v1h-1zM1 10h1v1h-1zM4 10h2v1h-2zM8 10h1v1h-1zM11 10h1v1h-1zM1 11h1v1h-1zM5 11h1v1h-1zM8 11h1v1h-1zM11 11h1v1h-1zM7 12h2v1h-2z"/></symbol><symbol id="gff09" overflow="visible" viewBox="0 0 14 16"><path d="M1 0h1v1h-1zM2 1h1v1h-1zM2 2h1v1h-1zM3 3h1v1h-1zM3 4h1v1h-1zM3 5h1v1h-1zM3 6h1v1h-1zM3 7h1v1h-1zM3 8h1v1h-1zM2 9h1v1h-1zM2 10h1v1h-1zM1 11h1v1h-1z"/></symbol><symbol id="g5bf9" overflow="visible" viewBox="0 0 14 16"><path d="M10 0h1v1h-1zM10 1h1v1h-1zM1 2h5v1h-5zM10 2h1v1h-1zM5 3h1v1h-1zM10 3h1v1h-1zM5 4h7v1h-7zM5 5h1v1h-1zM10 5h1v1h-1zM2 6h1v1h-1zM4 6h1v1h-1zM10 6h1v1h-1zM3 7h2v1h-2zM7 7h1v1h-1zM10 7h1v1h-1zM4 8h1v1h-1zM7 8h2v1h-2zM10 8h1v1h-1zM3 9h3v1h-3zM10 9h1v1h-1zM2 10h2v1h-2zM5 10h1v1h-1zM10 10h1v1h-1zM1 11h2v1h-2zM10 11h1v1h-1zM1 12h1v1h-1zM8 12h3v1h-3z"/></symbol><symbol id="g8fdb" overflow="visible" viewBox="0 0 14 16"><path d="M6 0h1v1h-1zM9 0h1v1h-1zM1 1h2v1h-2zM6 1h1v1h-1zM9 1h1v1h-1zM2 2h1v1h-1zM6 2h1v1h-1zM9 2h1v1h-1zM4 3h8v1h-8zM6 4h1v1h-1zM9 4h1v1h-1zM1 5h2v1h-2zM6 5h1v1h-1zM9 5h1v1h-1zM2 6h1v1h-1zM4 6h8v1h-8zM2 7h1v1h-1zM6 7h1v1h-1zM9 7h1v1h-1zM2 8h1v1h-1zM6 8h1v1h-1zM9 8h1v1h-1zM2 9h1v1h-1zM5 9h1v1h-1zM9 9h1v1h-1zM2 10h1v1h-1zM5 10h1v1h-1zM9 10h1v1h-1zM1 11h1v1h-1zM3 11h2v1h-2zM1 12h1v1h-1zM5 12h7v1h-7z"/></symbol><symbol id="g884c" overflow="visible" viewBox="0 0 14 16"><path d="M3 0h1v1h-1zM2 1h2v1h-2zM6 1h6v1h-6zM1 2h2v1h-2zM1 3h1v1h-1zM4 3h1v1h-1zM3 4h1v1h-1zM2 5h2v1h-2zM5 5h7v1h-7zM1 6h2v1h-2zM9 6h1v1h-1zM0 7h3v1h-3zM9 7h1v1h-1zM2 8h1v1h-1zM9 8h1v1h-1zM2 9h1v1h-1zM9 9h1v1h-1zM2 10h1v1h-1zM9 10h1v1h-1zM2 11h1v1h-1zM9 11h1v1h-1zM2 12h1v1h-1zM7 12h3v1h-3z"/></symbol><symbol id="g5b58" overflow="visible" viewBox="0 0 14 16"><path d="M5 0h1v1h-1zM5 1h1v1h-1zM1 2h11v1h-11zM4 3h1v1h-1zM3 4h1v1h-1zM5 4h6v1h-6zM2 5h2v1h-2zM9 5h2v1h-2zM2 6h1v1h-1zM8 6h2v1h-2zM1 7h2v1h-2zM8 7h1v1h-1zM2 8h1v1h-1zM4 8h8v1h-8zM2 9h1v1h-1zM8 9h1v1h-1zM2 10h1v1h-1zM8 10h1v1h-1zM2 11h1v1h-1zM8 11h1v1h-1zM2 12h1v1h-1zM6 12h3v1h-3z"/></symbol><symbol id="g50a8" overflow="visible" viewBox="0 0 14 16"><path d="M3 0h1v1h-1zM8 0h1v1h-1zM2 1h1v1h-1zM4 1h1v1h-1zM8 1h1v1h-1zM11 1h1v1h-1zM2 2h1v1h-1zM4 2h8v1h-8zM2 3h1v1h-1zM8 3h1v1h-1zM10 3h1v1h-1zM1 4h2v1h-2zM6 4h6v1h-6zM1 5h4v1h-4zM8 5h1v1h-1zM2 6h1v1h-1zM4 6h1v1h-1zM7 6h2v1h-2zM2 7h1v1h-1zM4 7h1v1h-1zM6 7h6v1h-6zM2 8h1v1h-1zM4 8h1v1h-1zM7 8h1v1h-1zM11 8h1v1h-1zM2 9h1v1h-1zM4 9h1v1h-1zM7 9h5v1h-5zM2 10h1v1h-1zM4 10h4v1h-4zM11 10h1v1h-1zM2 11h1v1h-1zM4 11h1v1h-1zM7 11h5v1h-5zM2 12h1v1h-1zM7 12h1v1h-1zM11 12h1v1h-1z"/></symbol><symbol id="g5904" overflow="visible" viewBox="0 0 14 16"><path d="M3 0h1v1h-1zM8 0h1v1h-1zM3 1h1v1h-1zM8 1h1v1h-1zM2 2h5v1h-5zM8 2h1v1h-1zM2 3h1v1h-1zM5 3h1v1h-1zM8 3h2v1h-2zM2 4h1v1h-1zM5 4h1v1h-1zM8 4h2v1h-2zM1 5h2v1h-2zM5 5h1v1h-1zM8 5h1v1h-1zM10 5h1v1h-1zM1 6h1v1h-1zM3 6h1v1h-1zM5 6h1v1h-1zM8 6h1v1h-1zM11 6h1v1h-1zM3 7h2v1h-2zM8 7h1v1h-1zM4 8h1v1h-1zM8 8h1v1h-1zM3 9h3v1h-3zM8 9h1v1h-1zM2 10h2v1h-2zM5 10h2v1h-2zM1 11h2v1h-2zM7 11h5v1h-5z"/></symbol><symbol id="g7406" overflow="visible" viewBox="0 0 14 16"><path d="M1 1h11v1h-11zM2 2h1v1h-1zM5 2h1v1h-1zM8 2h1v1h-1zM11 2h1v1h-1zM2 3h1v1h-1zM5 3h7v1h-7zM2 4h1v1h-1zM5 4h1v1h-1zM8 4h1v1h-1zM11 4h1v1h-1zM1 5h3v1h-3zM5 5h1v1h-1zM8 5h1v1h-1zM11 5h1v1h-1zM2 6h1v1h-1zM5 6h7v1h-7zM2 7h1v1h-1zM8 7h1v1h-1zM2 8h1v1h-1zM8 8h1v1h-1zM2 9h1v1h-1zM4 9h8v1h-8zM0 10h4v1h-4zM8 10h1v1h-1zM4 11h9v1h-9z"/></symbol><symbol id="g5b8c" overflow="visible" viewBox="0 0 14 16"><path d="M6 0h1v1h-1zM6 1h1v1h-1zM1 2h11v1h-11zM1 3h1v1h-1zM11 3h1v1h-1zM1 4h1v1h-1zM3 4h7v1h-7zM11 4h1v1h-1zM1 7h11v1h-11zM4 8h1v1h-1zM7 8h1v1h-1zM4 9h1v1h-1zM7 9h1v1h-1zM4 10h1v1h-1zM7 10h1v1h-1zM3 11h1v1h-1zM7 11h1v1h-1zM11 11h1v1h-1zM1 12h2v1h-2zM8 12h4v1h-4z"/></symbol><symbol id="g518d" overflow="visible" viewBox="0 0 14 16"><path d="M1 1h11v1h-11zM6 2h1v1h-1zM2 3h9v1h-9zM2 4h1v1h-1zM6 4h1v1h-1zM10 4h1v1h-1zM2 5h1v1h-1zM6 5h1v1h-1zM10 5h1v1h-1zM2 6h9v1h-9zM2 7h1v1h-1zM6 7h1v1h-1zM10 7h1v1h-1zM2 8h1v1h-1zM6 8h1v1h-1zM10 8h1v1h-1zM1 9h12v1h-12zM2 10h1v1h-1zM10 10h1v1h-1zM2 11h1v1h-1zM10 11h1v1h-1zM2 12h1v1h-1zM8 12h3v1h-3z"/></symbol><symbol id="g3002" overflow="visible" viewBox="0 0 14 16"><path d="M2 8h1v1h-1zM1 9h1v1h-1zM3 9h1v1h-1zM1 10h1v1h-1zM4 10h1v1h-1zM1 11h1v1h-1zM3 11h1v1h-1zM2 12h1v1h-1z"/></symbol><symbol id="g6309" overflow="visible" viewBox="0 0 14 16"><path d="M2 0h1v1h-1zM8 0h1v1h-1zM2 1h1v1h-1zM8 1h1v1h-1zM2 2h1v1h-1zM5 2h7v1h-7zM1 3h5v1h-5zM11 3h1v1h-1zM2 4h1v1h-1zM5 4h1v1h-1zM7 4h1v1h-1zM11 4h1v1h-1zM2 5h1v1h-1zM7 5h1v1h-1zM2 6h1v1h-1zM5 6h7v1h-7zM2 7h3v1h-3zM6 7h1v1h-1zM10 7h1v1h-1zM0 8h3v1h-3zM6 8h1v1h-1zM10 8h1v1h-1zM2 9h1v1h-1zM6 9h2v1h-2zM9 9h1v1h-1zM2 10h1v1h-1zM8 10h2v1h-2zM2 11h1v1h-1zM6 11h2v1h-2zM10 11h1v1h-1zM1 12h2v1h-2zM5 12h1v1h-1zM11 12h1v1h-1z"/></symbol><symbol id="g952e" overflow="visible" viewBox="0 0 14 16"><path d="M2 0h1v1h-1zM9 0h1v1h-1zM2 1h1v1h-1zM5 1h7v1h-7zM1 2h1v1h-1zM6 2h1v1h-1zM9 2h1v1h-1zM11 2h1v1h-1zM0 3h2v1h-2zM5 3h1v1h-1zM7 3h6v1h-6zM0 4h1v1h-1zM5 4h1v1h-1zM9 4h1v1h-1zM11 4h1v1h-1zM1 5h11v1h-11zM2 6h1v1h-1zM6 6h1v1h-1zM9 6h1v1h-1zM1 7h3v1h-3zM6 7h6v1h-6zM2 8h1v1h-1zM5 8h2v1h-2zM9 8h1v1h-1zM2 9h1v1h-1zM5 9h7v1h-7zM2 10h1v1h-1zM5 10h2v1h-2zM9 10h1v1h-1zM2 11h2v1h-2zM5 11h1v1h-1zM7 11h1v1h-1zM9 11h1v1h-1zM4 12h1v1h-1zM8 12h4v1h-4z"/></symbol><symbol id="g949f" overflow="visible" viewBox="0 0 14 16"><path d="M2 -1h1v1h-1zM8 -1h1v1h-1zM2 0h3v1h-3zM8 0h1v1h-1zM1 1h1v1h-1zM8 1h1v1h-1zM1 2h1v1h-1zM6 2h6v1h-6zM6 3h1v1h-1zM8 3h1v1h-1zM11 3h1v1h-1zM1 4h4v1h-4zM6 4h1v1h-1zM8 4h1v1h-1zM11 4h1v1h-1zM3 5h1v1h-1zM6 5h1v1h-1zM8 5h1v1h-1zM11 5h1v1h-1zM1 6h4v1h-4zM6 6h6v1h-6zM3 7h1v1h-1zM6 7h1v1h-1zM8 7h1v1h-1zM11 7h1v1h-1zM3 8h1v1h-1zM8 8h1v1h-1zM3 9h1v1h-1zM8 9h1v1h-1zM2 10h3v1h-3zM8 10h1v1h-1zM2 11h1v1h-1zM8 11h1v1h-1z"/></symbol><symbol id="g7535" overflow="visible" viewBox="0 0 14 16"><path d="M6 0h1v1h-1zM6 1h1v1h-1zM2 2h9v1h-9zM2 3h1v1h-1zM6 3h1v1h-1zM10 3h1v1h-1zM2 4h1v1h-1zM6 4h1v1h-1zM10 4h1v1h-1zM2 5h9v1h-9zM2 6h1v1h-1zM6 6h1v1h-1zM10 6h1v1h-1zM2 7h1v1h-1zM6 7h1v1h-1zM10 7h1v1h-1zM2 8h9v1h-9zM2 9h1v1h-1zM6 9h1v1h-1zM6 10h1v1h-1zM11 10h1v1h-1zM6 11h1v1h-1zM11 11h1v1h-1zM6 12h6v1h-6z"/></symbol><symbol id="g5e73" overflow="visible" viewBox="0 0 14 16"><path d="M1 1h11v1h-11zM6 2h1v1h-1zM2 3h2v1h-2zM6 3h1v1h-1zM10 3h1v1h-1zM3 4h1v1h-1zM6 4h1v1h-1zM9 4h1v1h-1zM3 5h1v1h-1zM6 5h1v1h-1zM9 5h1v1h-1zM6 6h1v1h-1zM1 7h11v1h-11zM6 8h1v1h-1zM6 9h1v1h-1zM6 10h1v1h-1zM6 11h1v1h-1zM6 12h1v1h-1z"/></symbol><symbol id="g590d" overflow="visible" viewBox="0 0 14 16"><path d="M3 0h1v1h-1zM3 1h9v1h-9zM2 2h1v1h-1zM1 3h1v1h-1zM3 3h8v1h-8zM3 4h1v1h-1zM10 4h1v1h-1zM3 5h8v1h-8zM3 6h8v1h-8zM4 7h1v1h-1zM3 8h7v1h-7zM2 9h1v1h-1zM4 9h1v1h-1zM9 9h1v1h-1zM5 10h1v1h-1zM7 10h2v1h-2zM4 11h5v1h-5zM1 12h3v1h-3zM9 12h3v1h-3z"/></symbol><symbol id="g4f4d" overflow="visible" viewBox="0 0 14 16"><path d="M4 0h1v1h-1zM7 0h1v1h-1zM3 1h1v1h-1zM8 1h1v1h-1zM3 2h1v1h-1zM8 2h1v1h-1zM2 3h1v1h-1zM5 3h7v1h-7zM2 4h1v1h-1zM1 5h2v1h-2zM6 5h1v1h-1zM10 5h1v1h-1zM2 6h1v1h-1zM6 6h1v1h-1zM10 6h1v1h-1zM2 7h1v1h-1zM6 7h1v1h-1zM10 7h1v1h-1zM2 8h1v1h-1zM6 8h1v1h-1zM9 8h1v1h-1zM2 9h1v1h-1zM6 9h1v1h-1zM9 9h1v1h-1zM2 10h1v1h-1zM9 10h1v1h-1zM2 11h1v1h-1zM4 11h8v1h-8zM2 12h1v1h-1z"/></symbol><symbol id="g4e0b" overflow="visible" viewBox="0 0 14 16"><path d="M1 1h11v1h-11zM6 2h1v1h-1zM6 3h1v1h-1zM6 4h1v1h-1zM6 5h3v1h-3zM6 6h1v1h-1zM8 6h3v1h-3zM6 7h1v1h-1zM10 7h1v1h-1zM6 8h1v1h-1zM6 9h1v1h-1zM6 10h1v1h-1zM6 11h1v1h-1zM6 12h1v1h-1z"/></symbol><symbol id="g8868" overflow="visible" viewBox="0 0 14 16"><path d="M6 0h1v1h-1zM1 1h11v1h-11zM6 2h1v1h-1zM2 3h9v1h-9zM6 4h1v1h-1zM1 5h11v1h-11zM5 6h1v1h-1zM7 6h1v1h-1zM3 7h2v1h-2zM7 7h1v1h-1zM10 7h2v1h-2zM2 8h2v1h-2zM7 8h3v1h-3zM1 9h1v1h-1zM3 9h1v1h-1zM8 9h1v1h-1zM3 10h1v1h-1zM7 10h1v1h-1zM9 10h2v1h-2zM3 11h4v1h-4zM10 11h3v1h-3zM3 12h1v1h-1z"/></symbol></defs></svg>
<!-- menubar -->
<div id="menu" class="a">
<span style="left:4px"><u>F</u>ile</span>
<span style="left:36px"><u>E</u>dit</span>
<span style="left:70px"><u>V</u>iew</span>
<span style="left:108px"><u>P</u>roject</span>
<span style="left:158px"><u>A</u>ssignments</span>
<span style="left:233px">P<u>r</u>ocessing</span>
<span style="left:301px"><u>T</u>ools</span>
<span style="left:342px"><u>W</u>indow</span>
<span style="left:395px"><u>H</u>elp</span>
<span style="left:441px;font-weight:bold">›</span>
</div>
<!-- toolbar lines -->
<div class="hl" style="left:0;top:38px;width:1640px;background:#a9a9a9"></div>
<div class="hl" style="left:0;top:39px;width:1640px;background:#fff"></div>
<div class="vl" style="left:226px;top:13px;height:25px;background:#bdbdbd"></div>
<div class="vl" style="left:227px;top:13px;height:25px;background:#fff"></div>
<div class="hl" style="left:0;top:64px;width:1640px;background:#a9a9a9"></div>
<div class="grip" style="left:0;top:17px;height:17px"></div>
<div class="grip" style="left:232px;top:17px;height:17px"></div>
<div class="grip" style="left:0;top:43px;height:17px"></div>
<div class="combo" style="left:237px;top:16px;width:200px;height:20px"></div>
<div class="t" style="left:240px;top:19px">sickroom</div>
<div class="arr" style="left:424px;top:24px"></div>

<!-- Project Navigator -->
<div class="dock" style="left:-5px;top:67px;width:386px;height:17px"></div>
<div class="t" style="left:1px;top:71px">Project Navigator</div>
<div class="frame" style="left:-5px;top:86px;width:385px;height:427px"></div>
<div class="hdr" style="left:0;top:87px;width:378px;height:21px"></div>
<div class="t" style="left:287px;top:92px">Entity</div>
<div class="rowl" style="left:0;top:128px;width:378px"></div>
<div class="rowl" style="left:0;top:148px;width:378px"></div>
<div class="rowl" style="left:0;top:168px;width:378px"></div>
<div class="a" style="left:38px;top:188px;width:340px;height:21px;background:linear-gradient(#f9f9f9,#e6e6e6);border-top:1px solid #d9d9d9;border-bottom:1px solid #d9d9d9;border-left:1px solid #e0e0e0"></div>
<div class="t" style="left:22px;top:114px">Cyclone II: EP2C8Q208C8</div>
<div class="t" style="left:42px;top:134px">sickroom</div>
<div class="t" style="left:62px;top:154px">beep_ctrl:inst</div>
<div class="t" style="left:62px;top:174px">key_jitter:inst1</div>
<div class="t" style="left:62px;top:194px">sickroom_ctrl:inst3</div>
<div class="hsb" style="left:0;top:496px;width:378px;height:16px"></div>
<div class="thumb" style="left:16px;top:496px;width:78px;height:15px"></div>

<!-- bottom tabs -->
<div class="a" style="left:-5px;top:512px;width:93px;height:27px;background:#fff;border:1px solid #858a96;border-top:none"></div>
<div class="tab" style="left:88px;top:515px;width:63px;height:22px;border-bottom:1px solid #858a96"></div>
<div class="tab" style="left:151px;top:515px;width:102px;height:22px;border-bottom:1px solid #858a96"></div>
<div class="tab" style="left:253px;top:515px;width:98px;height:22px;border-bottom:1px solid #858a96"></div>
<div class="t" style="left:28px;top:520px">Hierarchy</div>
<div class="t" style="left:117px;top:519px">Files</div>
<div class="t" style="left:182px;top:519px">Design Units</div>
<div class="t" style="left:285px;top:519px;width:64px;overflow:hidden">IP Components</div>

<!-- Tasks -->
<div class="dock" style="left:-5px;top:545px;width:386px;height:17px"></div>
<div class="t" style="left:1px;top:549px">Tasks</div>
<div class="t" style="left:-4px;top:574px">Flow:</div>
<div class="combo" style="left:29px;top:569px;width:272px;height:22px"></div>
<div class="t" style="left:32px;top:574px">Full Design</div>
<div class="arr" style="left:287px;top:578px"></div>
<div class="combo" style="left:308px;top:570px;width:73px;height:21px;border-radius:4px"></div>
<div class="t" style="left:314px;top:575px">Customize...</div>
<div class="frame" style="left:-5px;top:598px;width:387px;height:95px"></div>
<div class="hdr" style="left:0;top:599px;width:365px;height:23px"></div>
<div class="t" style="left:155px;top:605px">Task</div>
<div class="t" style="left:344px;top:605px;width:21px;overflow:hidden">Time</div>
<div class="rowl" style="left:0;top:642px;width:365px"></div>
<div class="rowl" style="left:0;top:662px;width:365px"></div>
<div class="vl" style="left:36px;top:599px;height:77px;background:#e3e3e3"></div>
<div class="vl" style="left:296px;top:599px;height:77px;background:#e3e3e3"></div>
<div class="t" style="left:81px;top:628px">Start Project</div>
<div class="t" style="left:81px;top:648px">Create Design</div>
<div class="a" style="left:0;top:662px;width:365px;height:13px;overflow:hidden"><div class="t" style="left:81px;top:6px">Assign Constraints</div></div>
<div class="hsb" style="left:365px;top:599px;width:16px;height:77px"></div>
<div class="thumb" style="left:365px;top:617px;width:15px;height:16px"></div>
<div class="hsb" style="left:0;top:676px;width:381px;height:16px"></div>
<div class="thumb" style="left:16px;top:676px;width:302px;height:15px"></div>

<!-- Status -->
<div class="dock" style="left:-5px;top:700px;width:386px;height:16px"></div>
<div class="t" style="left:1px;top:703px">Status</div>
<div class="frame" style="left:-5px;top:718px;width:387px;height:110px"></div>
<div class="hdr" style="left:0;top:719px;width:381px;height:23px"></div>
<div class="vl" style="left:96px;top:719px;height:22px;background:#e3e3e3"></div>
<div class="vl" style="left:196px;top:719px;height:22px;background:#e3e3e3"></div>
<div class="t" style="left:29px;top:725px">Module</div>
<div class="t" style="left:134px;top:725px">Progress</div>
<div class="t" style="left:287px;top:725px">Time</div>

<!-- Editor -->
<div class="a" style="left:386px;top:114px;width:1254px;height:700px;border-left:1px solid #858a96;border-top:2px solid #a0a0a0;background:#fff"></div>
<div class="hl" style="left:386px;top:88px;width:1254px;background:#858a96"></div>
<div class="hl" style="left:386px;top:89px;width:1254px;background:#fff"></div>
<div class="tab" style="left:388px;top:67px;width:304px;height:21px"></div>
<div class="tab" style="left:692px;top:67px;width:306px;height:21px"></div>
<div class="tab" style="left:998px;top:67px;width:305px;height:21px"></div>
<div class="a" style="left:1302px;top:65px;width:308px;height:25px;background:#fff;border:1px solid #858a96;border-bottom:none"></div>
<div class="t" style="left:507px;top:72px">sickroom.bdf</div>
<div class="t" style="left:816px;top:72px">beep_ctrl.v</div>
<div class="t" style="left:1122px;top:72px">key_jitter.v</div>
<div class="t" style="left:1420px;top:71px">sickroom_ctrl.v</div>

<div id="gutter" class="a"></div>
<div id="dots" class="a"></div>
<div class="a" style="left:445px;top:199px;width:11px;height:11px;border:1px solid #000;background:#fff"></div>
<div class="a" style="left:447px;top:204px;width:7px;height:1px;background:#000"></div>
<div class="a" style="left:450px;top:212px;width:1px;height:184px;background:#000"></div>
<div class="a" style="left:450px;top:395px;width:6px;height:1px;background:#000"></div>
<div id="code" class="a">
<div class="ln" style="top:2px">1</div>
<div class="ln" style="top:18px">2</div>
<div class="ln" style="top:34px">3</div>
<div class="ln" style="top:50px">4</div>
<div class="ln" style="top:66px">5</div>
<div class="ln" style="top:82px">6</div>
<div class="ln" style="top:98px">7</div>
<div class="ln" style="top:114px">8</div>
<div class="ln" style="top:130px">9</div>
<div class="ln" style="top:146px">10</div>
<div class="ln" style="top:162px">11</div>
<div class="ln" style="top:178px">12</div>
<div class="ln" style="top:194px">13</div>
<div class="ln" style="top:210px">14</div>
<div class="ln" style="top:226px">15</div>
<div class="ln" style="top:242px">16</div>
<div class="ln" style="top:258px">17</div>
<div class="ln" style="top:274px">18</div>
<div class="ln" style="top:290px">19</div>
<div class="ln" style="top:306px">20</div>
<div class="ln" style="top:322px">21</div>
<div class="ln" style="top:338px">22</div>
<div class="ln" style="top:354px">23</div>
<div class="ln" style="top:370px">24</div>
<div class="ln" style="top:386px">25</div>
<div class="ln" style="top:402px">26</div>
<div class="ln" style="top:418px">27</div>
<div class="ln" style="top:434px">28</div>
<div class="ln" style="top:450px">29</div>
<div class="ln" style="top:466px">30</div>
<div class="ln" style="top:482px">31</div>
<div class="ln" style="top:498px">32</div>
<div class="ln" style="top:514px">33</div>
<div class="ln" style="top:530px">34</div>
<div class="ln" style="top:546px">35</div>
<div class="ln" style="top:562px">36</div>
<div class="ln" style="top:578px">37</div>
<div class="ln" style="top:594px">38</div>
<div class="ln" style="top:610px">39</div>
<div class="ln" style="top:626px">40</div>
<div class="ln" style="top:642px">41</div>
<div class="ln" style="top:658px">42</div>
<div class="ln" style="top:674px">43</div>
<div class="cl" style="top:2px"><i class="c">//1<svg class="cj"><use href="#g3001"/></svg><svg class="cj"><use href="#g7528"/></svg>1~4<svg class="cj"><use href="#g4e2a"/></svg><svg class="cj"><use href="#g62e8"/></svg><svg class="cj"><use href="#g7801"/></svg><svg class="cj"><use href="#g5f00"/></svg><svg class="cj"><use href="#g5173"/></svg><svg class="cj"><use href="#g6a21"/></svg><svg class="cj"><use href="#g62df"/></svg>4<svg class="cj"><use href="#g4e2a"/></svg><svg class="cj"><use href="#g75c5"/></svg><svg class="cj"><use href="#g623f"/></svg><svg class="cj"><use href="#g7684"/></svg><svg class="cj"><use href="#g547c"/></svg><svg class="cj"><use href="#g53eb"/></svg><svg class="cj"><use href="#g8f93"/></svg><svg class="cj"><use href="#g5165"/></svg><svg class="cj"><use href="#g4fe1"/></svg><svg class="cj"><use href="#g53f7"/></svg><svg class="cj"><use href="#gff0c"/></svg>1<svg class="cj"><use href="#g53f7"/></svg><svg class="cj"><use href="#g4f18"/></svg><svg class="cj"><use href="#g5148"/></svg><svg class="cj"><use href="#g7ea7"/></svg><svg class="cj"><use href="#g6700"/></svg><svg class="cj"><use href="#g9ad8"/></svg><svg class="cj"><use href="#gff1b"/></svg>1~4<svg class="cj"><use href="#g4f18"/></svg><svg class="cj"><use href="#g5148"/></svg><svg class="cj"><use href="#g7ea7"/></svg><svg class="cj"><use href="#g4f9d"/></svg><svg class="cj"><use href="#g6b21"/></svg><svg class="cj"><use href="#g964d"/></svg><svg class="cj"><use href="#g4f4e"/></svg><svg class="cj"><use href="#gff1b"/></svg></i></div>
<div class="cl" style="top:18px"><i class="c">//2<svg class="cj"><use href="#g3001"/></svg><svg class="cj"><use href="#g7528"/></svg><svg class="cj"><use href="#g4e00"/></svg><svg class="cj"><use href="#g4e2a"/></svg><svg class="cj"><use href="#g6570"/></svg><svg class="cj"><use href="#g7801"/></svg><svg class="cj"><use href="#g7ba1"/></svg><svg class="cj"><use href="#g663e"/></svg><svg class="cj"><use href="#g793a"/></svg><svg class="cj"><use href="#g547c"/></svg><svg class="cj"><use href="#g53eb"/></svg><svg class="cj"><use href="#g4fe1"/></svg><svg class="cj"><use href="#g53f7"/></svg><svg class="cj"><use href="#g7684"/></svg><svg class="cj"><use href="#g53f7"/></svg><svg class="cj"><use href="#g7801"/></svg><svg class="cj"><use href="#gff0c"/></svg><svg class="cj"><use href="#g6ca1"/></svg><svg class="cj"><use href="#g4fe1"/></svg><svg class="cj"><use href="#g53f7"/></svg><svg class="cj"><use href="#g547c"/></svg><svg class="cj"><use href="#g53eb"/></svg><svg class="cj"><use href="#g65f6"/></svg><svg class="cj"><use href="#g663e"/></svg><svg class="cj"><use href="#g793a"/></svg>0<svg class="cj"><use href="#gff1b"/></svg><svg class="cj"><use href="#g6709"/></svg><svg class="cj"><use href="#g591a"/></svg><svg class="cj"><use href="#g4e2a"/></svg><svg class="cj"><use href="#g4fe1"/></svg><svg class="cj"><use href="#g53f7"/></svg><svg class="cj"><use href="#g547c"/></svg><svg class="cj"><use href="#g53eb"/></svg><svg class="cj"><use href="#g65f6"/></svg><svg class="cj"><use href="#gff0c"/></svg><svg class="cj"><use href="#g663e"/></svg><svg class="cj"><use href="#g793a"/></svg><svg class="cj"><use href="#g4f18"/></svg><svg class="cj"><use href="#g5148"/></svg><svg class="cj"><use href="#g7ea7"/></svg><svg class="cj"><use href="#g6700"/></svg><svg class="cj"><use href="#g9ad8"/></svg><svg class="cj"><use href="#g7684"/></svg><svg class="cj"><use href="#g547c"/></svg><svg class="cj"><use href="#g53eb"/></svg><svg class="cj"><use href="#g53f7"/></svg>(<svg class="cj"><use href="#g5176"/></svg><svg class="cj"><use href="#g5b83"/></svg><svg class="cj"><use href="#g547c"/></svg><svg class="cj"><use href="#g53eb"/></svg><svg class="cj"><use href="#g53f7"/></svg><svg class="cj"><use href="#g7528"/></svg><svg class="cj"><use href="#g6307"/></svg><svg class="cj"><use href="#g793a"/></svg><svg class="cj"><use href="#g706f"/></svg><svg class="cj"><use href="#g663e"/></svg><svg class="cj"><use href="#g793a"/></svg>)<svg class="cj"><use href="#gff1b"/></svg>(<svg class="cj"><use href="#g6570"/></svg><svg class="cj"><use href="#g7801"/></svg><svg class="cj"><use href="#g7ba1"/></svg>8<svg class="cj"><use href="#g663e"/></svg><svg class="cj"><use href="#g793a"/></svg><svg class="cj"><use href="#g5f53"/></svg><svg class="cj"><use href="#g524d"/></svg><svg class="cj"><use href="#g547c"/></svg><svg class="cj"><use href="#g53eb"/></svg><svg class="cj"><use href="#g53f7"/></svg><svg class="cj"><use href="#g7801"/></svg>)</i></div>
<div class="cl" style="top:34px"><i class="c">//3<svg class="cj"><use href="#g3001"/></svg><svg class="cj"><use href="#g51e1"/></svg><svg class="cj"><use href="#g6709"/></svg><svg class="cj"><use href="#g547c"/></svg><svg class="cj"><use href="#g53eb"/></svg><svg class="cj"><use href="#g53d1"/></svg><svg class="cj"><use href="#g51fa"/></svg>5<svg class="cj"><use href="#g79d2"/></svg><svg class="cj"><use href="#g7684"/></svg><svg class="cj"><use href="#g547c"/></svg><svg class="cj"><use href="#g53eb"/></svg><svg class="cj"><use href="#g58f0"/></svg><svg class="cj"><use href="#gff08"/></svg><svg class="cj"><use href="#g8702"/></svg><svg class="cj"><use href="#g9e23"/></svg><svg class="cj"><use href="#g5668"/></svg><svg class="cj"><use href="#g9891"/></svg><svg class="cj"><use href="#g7387"/></svg>1Hz<svg class="cj"><use href="#gff0c"/></svg><svg class="cj"><use href="#g6301"/></svg><svg class="cj"><use href="#g7eed"/></svg>5<svg class="cj"><use href="#g79d2"/></svg><svg class="cj"><use href="#gff0c"/></svg>LED1<svg class="cj"><use href="#g9891"/></svg><svg class="cj"><use href="#g7387"/></svg>1Hz<svg class="cj"><use href="#g4e00"/></svg><svg class="cj"><use href="#g76f4"/></svg><svg class="cj"><use href="#g95ea"/></svg><svg class="cj"><use href="#g70c1"/></svg><svg class="cj"><use href="#gff09"/></svg><svg class="cj"><use href="#gff1b"/></svg></i></div>
<div class="cl" style="top:50px"><i class="c">//4<svg class="cj"><use href="#g3001"/></svg><svg class="cj"><use href="#g5bf9"/></svg><svg class="cj"><use href="#g4f4e"/></svg><svg class="cj"><use href="#g4f18"/></svg><svg class="cj"><use href="#g5148"/></svg><svg class="cj"><use href="#g7ea7"/></svg><svg class="cj"><use href="#g7684"/></svg><svg class="cj"><use href="#g547c"/></svg><svg class="cj"><use href="#g53eb"/></svg><svg class="cj"><use href="#g8fdb"/></svg><svg class="cj"><use href="#g884c"/></svg><svg class="cj"><use href="#g5b58"/></svg><svg class="cj"><use href="#g50a8"/></svg><svg class="cj"><use href="#gff0c"/></svg><svg class="cj"><use href="#g5904"/></svg><svg class="cj"><use href="#g7406"/></svg><svg class="cj"><use href="#g5b8c"/></svg><svg class="cj"><use href="#g9ad8"/></svg><svg class="cj"><use href="#g4f18"/></svg><svg class="cj"><use href="#g5148"/></svg><svg class="cj"><use href="#g7ea7"/></svg><svg class="cj"><use href="#g7684"/></svg><svg class="cj"><use href="#g547c"/></svg><svg class="cj"><use href="#g53eb"/></svg><svg class="cj"><use href="#gff0c"/></svg><svg class="cj"><use href="#g518d"/></svg><svg class="cj"><use href="#g8fdb"/></svg><svg class="cj"><use href="#g884c"/></svg><svg class="cj"><use href="#g4f4e"/></svg><svg class="cj"><use href="#g4f18"/></svg><svg class="cj"><use href="#g5148"/></svg><svg class="cj"><use href="#g7ea7"/></svg><svg class="cj"><use href="#g547c"/></svg><svg class="cj"><use href="#g53eb"/></svg><svg class="cj"><use href="#g7684"/></svg><svg class="cj"><use href="#g5904"/></svg><svg class="cj"><use href="#g7406"/></svg><svg class="cj"><use href="#g3002"/></svg><svg class="cj"><use href="#gff08"/></svg><svg class="cj"><use href="#g6309"/></svg><svg class="cj"><use href="#g952e"/></svg>S5<svg class="cj"><use href="#g8fdb"/></svg><svg class="cj"><use href="#g884c"/></svg><svg class="cj"><use href="#g5904"/></svg><svg class="cj"><use href="#g7406"/></svg><svg class="cj"><use href="#gff09"/></svg></i></div>
<div class="cl" style="top:66px"></div>
<div class="cl" style="top:82px"><i class="k">module</i> sickroom_ctrl(</div>
<div class="cl" style="top:98px"><i class="k">input</i> clk,<i class="c">//<svg class="cj"><use href="#g65f6"/></svg><svg class="cj"><use href="#g949f"/></svg>50MHz</i></div>
<div class="cl" style="top:114px"><i class="k">input</i> rst_p,<i class="c">//<svg class="cj"><use href="#g4f4e"/></svg><svg class="cj"><use href="#g7535"/></svg><svg class="cj"><use href="#g5e73"/></svg><svg class="cj"><use href="#g590d"/></svg><svg class="cj"><use href="#g4f4d"/></svg></i></div>
<div class="cl" style="top:130px"><i class="c">//4<svg class="cj"><use href="#g4e2a"/></svg><svg class="cj"><use href="#g547c"/></svg><svg class="cj"><use href="#g53eb"/></svg><svg class="cj"><use href="#g6309"/></svg><svg class="cj"><use href="#g952e"/></svg></i></div>
<div class="cl" style="top:146px"><i class="k">input</i> key_1,</div>
<div class="cl" style="top:162px"><i class="k">input</i> key_2,</div>
<div class="cl" style="top:178px"><i class="k">input</i> key_3,</div>
<div class="cl" style="top:194px"><i class="k">input</i> key_4,</div>
<div class="cl" style="top:210px"><i class="k">input</i> deal_key,<i class="c">//<svg class="cj"><use href="#g5904"/></svg><svg class="cj"><use href="#g7406"/></svg><svg class="cj"><use href="#g6309"/></svg><svg class="cj"><use href="#g952e"/></svg><svg class="cj"><use href="#gff0c"/></svg><svg class="cj"><use href="#g6309"/></svg><svg class="cj"><use href="#g4e0b"/></svg><svg class="cj"><use href="#g8868"/></svg><svg class="cj"><use href="#g793a"/></svg><svg class="cj"><use href="#g5904"/></svg><svg class="cj"><use href="#g7406"/></svg><svg class="cj"><use href="#g5f53"/></svg><svg class="cj"><use href="#g524d"/></svg><svg class="cj"><use href="#g6700"/></svg><svg class="cj"><use href="#g9ad8"/></svg><svg class="cj"><use href="#g4f18"/></svg><svg class="cj"><use href="#g5148"/></svg><svg class="cj"><use href="#g7ea7"/></svg></i></div>
<div class="cl" style="top:226px"><i class="k">output</i> [<i class="n">5</i>:<i class="n">0</i>] led,<i class="c">//<svg class="cj"><use href="#g547c"/></svg><svg class="cj"><use href="#g53eb"/></svg><svg class="cj"><use href="#g6307"/></svg><svg class="cj"><use href="#g793a"/></svg><svg class="cj"><use href="#g706f"/></svg></i></div>
<div class="cl" style="top:242px"><i class="k">output</i> [<i class="n">7</i>:<i class="n">0</i>] dig,</div>
<div class="cl" style="top:258px"><i class="k">output</i> <i class="k">reg</i> [<i class="n">7</i>:<i class="n">0</i>] dataout</div>
<div class="cl" style="top:274px">);</div>
<div class="cl" style="top:290px"><i class="k">assign</i> dig=<i class="n">8&#x27;b1111_1110</i>;</div>
<div class="cl" style="top:306px"><i class="k">reg</i> [<i class="n">3</i>:<i class="n">0</i>] number;<i class="c">//<svg class="cj"><use href="#g6570"/></svg><svg class="cj"><use href="#g7801"/></svg><svg class="cj"><use href="#g7ba1"/></svg><svg class="cj"><use href="#g663e"/></svg><svg class="cj"><use href="#g793a"/></svg><svg class="cj"><use href="#g547c"/></svg><svg class="cj"><use href="#g53eb"/></svg><svg class="cj"><use href="#g4fe1"/></svg><svg class="cj"><use href="#g53f7"/></svg><svg class="cj"><use href="#g7684"/></svg><svg class="cj"><use href="#g53f7"/></svg><svg class="cj"><use href="#g7801"/></svg></i></div>
<div class="cl" style="top:322px"><i class="k">reg</i> [<i class="n">5</i>:<i class="n">0</i>] call_data=<i class="n">6&#x27;d0</i>;</div>
<div class="cl" style="top:338px"><i class="k">always</i>@(<i class="k">posedge</i> clk <i class="k">or</i> <i class="k">negedge</i> rst_p)</div>
<div class="cl" style="top:354px">   <i class="k">if</i>(rst_p==<i class="n">0</i>)</div>
<div class="cl" style="top:370px">      call_data&lt;=<i class="n">6&#x27;d0</i>;</div>
<div class="cl" style="top:386px">   <i class="k">else</i></div>
<div class="cl" style="top:402px">      <i class="k">if</i>(key_1==<i class="n">0</i>)<i class="c">//<svg class="cj"><use href="#g547c"/></svg><svg class="cj"><use href="#g53eb"/></svg><svg class="cj"><use href="#g6309"/></svg><svg class="cj"><use href="#g952e"/></svg>1</i></div>
<div class="cl" style="top:418px">         call_data&lt;=call_data | <i class="n">6&#x27;b100000</i>;</div>
<div class="cl" style="top:434px">      <i class="k">else</i> <i class="k">if</i>(key_2==<i class="n">0</i>)<i class="c">//<svg class="cj"><use href="#g547c"/></svg><svg class="cj"><use href="#g53eb"/></svg><svg class="cj"><use href="#g6309"/></svg><svg class="cj"><use href="#g952e"/></svg>2</i></div>
<div class="cl" style="top:450px">         call_data&lt;=call_data | <i class="n">6&#x27;b010000</i>;</div>
<div class="cl" style="top:466px">      <i class="k">else</i> <i class="k">if</i>(key_3==<i class="n">0</i>)<i class="c">//<svg class="cj"><use href="#g547c"/></svg><svg class="cj"><use href="#g53eb"/></svg><svg class="cj"><use href="#g6309"/></svg><svg class="cj"><use href="#g952e"/></svg>3</i></div>
<div class="cl" style="top:482px">         call_data&lt;=call_data | <i class="n">6&#x27;b001000</i>;</div>
<div class="cl" style="top:498px">      <i class="k">else</i> <i class="k">if</i>(key_4==<i class="n">0</i>)<i class="c">//<svg class="cj"><use href="#g547c"/></svg><svg class="cj"><use href="#g53eb"/></svg><svg class="cj"><use href="#g6309"/></svg><svg class="cj"><use href="#g952e"/></svg>4</i></div>
<div class="cl" style="top:514px">         call_data&lt;=call_data | <i class="n">6&#x27;b000100</i>;</div>
<div class="cl" style="top:530px"></div>
<div class="cl" style="top:546px">      <i class="k">else</i> <i class="k">if</i>(call_data[<i class="n">5</i>]==<i class="n">1</i>)</div>
<div class="cl" style="top:562px">         <i class="k">if</i>(deal_key==<i class="n">0</i>)<i class="c">//<svg class="cj"><use href="#g5904"/></svg><svg class="cj"><use href="#g7406"/></svg><svg class="cj"><use href="#g6309"/></svg><svg class="cj"><use href="#g952e"/></svg></i></div>
<div class="cl" style="top:578px">            call_data&lt;=call_data &amp; <i class="n">6&#x27;b011111</i>;</div>
<div class="cl" style="top:594px">         <i class="k">else</i></div>
<div class="cl" style="top:610px">            call_data&lt;=call_data;</div>
<div class="cl" style="top:626px">      <i class="k">else</i> <i class="k">if</i>(call_data[<i class="n">4</i>]==<i class="n">1</i>)</div>
<div class="cl" style="top:642px">         <i class="k">if</i>(deal_key==<i class="n">0</i>)<i class="c">//<svg class="cj"><use href="#g5904"/></svg><svg class="cj"><use href="#g7406"/></svg><svg class="cj"><use href="#g6309"/></svg><svg class="cj"><use href="#g952e"/></svg></i></div>
<div class="cl" style="top:658px">            call_data&lt;=call_data &amp; <i class="n">6&#x27;b101111</i>;</div>
<div class="cl" style="top:674px">         <i class="k">else</i></div>
</div>
<div class="hsb" style="left:387px;top:799px;width:1253px;height:15px"></div>
<div class="thumb" style="left:405px;top:800px;width:132px;height:16px"></div>

<svg width="0" height="0" style="position:absolute"><defs>
<linearGradient id="gpage" x1="0" y1="0" x2="1" y2="1"><stop offset="0" stop-color="#ffffff"/><stop offset="1" stop-color="#b9c9f0"/></linearGradient>
<linearGradient id="gfold" x1="0" y1="0" x2="0" y2="1"><stop offset="0" stop-color="#fde9a0"/><stop offset="1" stop-color="#e8b53a"/></linearGradient>
<linearGradient id="gfold2" x1="0" y1="0" x2="0" y2="1"><stop offset="0" stop-color="#ffd460"/><stop offset="1" stop-color="#e49a12"/></linearGradient>
<linearGradient id="gdia" x1="0" y1="0" x2="1" y2="1"><stop offset="0" stop-color="#b6cdf2"/><stop offset="1" stop-color="#3f6fc6"/></linearGradient>
<linearGradient id="gpurp" x1="0" y1="0" x2="1" y2="1"><stop offset="0" stop-color="#e6a6ec"/><stop offset="1" stop-color="#7a2fb8"/></linearGradient>
<linearGradient id="ggray" x1="0" y1="0" x2="0" y2="1"><stop offset="0" stop-color="#f4f4f4"/><stop offset="1" stop-color="#9a9a9a"/></linearGradient>
<linearGradient id="gblue" x1="0" y1="0" x2="1" y2="1"><stop offset="0" stop-color="#8e8ee8"/><stop offset="1" stop-color="#3838a8"/></linearGradient>
<linearGradient id="gyel" x1="0" y1="0" x2="1" y2="1"><stop offset="0" stop-color="#fff27a"/><stop offset="1" stop-color="#f0b400"/></linearGradient>
<linearGradient id="ggreen" x1="0" y1="0" x2="1" y2="0"><stop offset="0" stop-color="#2f8f3a"/><stop offset="1" stop-color="#9bd69f"/></linearGradient>
<linearGradient id="gclock" x1="0" y1="0" x2="0" y2="1"><stop offset="0" stop-color="#ffffff"/><stop offset="1" stop-color="#b8c8ee"/></linearGradient>
<linearGradient id="gtri" x1="0" y1="0" x2="1" y2="1"><stop offset="0" stop-color="#fff07a"/><stop offset="1" stop-color="#e09a10"/></linearGradient>
</defs></svg><svg class="a" style="left:9px;top:18px" width="16" height="16" viewBox="0 0 16 16"><path d="M2.5 .5H9.5L13.5 4.5V14.5H2.5Z" fill="url(#gpage)" stroke="#26476e"/><path d="M9.5 .5V4.5H13.5" fill="#fff" stroke="#26476e" stroke-width=".8"/></svg>
<svg class="a" style="left:32px;top:18px" width="16" height="16" viewBox="0 0 16 16"><path d="M.5 3.5H6L7.5 5H13V14.5H.5Z" fill="url(#gfold)" stroke="#8b7440"/><path d="M3 8H16L13 14.5H.5Z" fill="url(#gfold2)" stroke="#7a5a10" stroke-width=".8"/><path d="M9 3.5C10 .8 13 .6 14.5 3" fill="none" stroke="#3a6aa8" stroke-width="1.3"/><path d="M13 3.2L15.8 2.6L15 5.2Z" fill="#3a6aa8"/></svg>
<svg class="a" style="left:55px;top:18px" width="16" height="16" viewBox="0 0 16 16"><rect x="1" y="1" width="14" height="14" fill="#a6a6a6"/><rect x="3.5" y="1.5" width="9" height="6" fill="#f2f2f2"/><rect x="5" y="10" width="6" height="5" fill="#e6e6e6"/><rect x="5.5" y="10.5" width="2" height="2" fill="#777"/></svg>
<svg class="a" style="left:78px;top:18px" width="16" height="16" viewBox="0 0 16 16"><rect x="5" y="1" width="10" height="10" fill="url(#gblue)"/><rect x="3" y="3" width="10" height="10" fill="url(#gblue)" stroke="#2a2a8a" stroke-width=".5"/><rect x="1" y="5" width="10" height="10" fill="url(#gblue)" stroke="#2a2a8a" stroke-width=".5"/><rect x="3" y="6" width="6" height="3.5" fill="#fff"/><rect x="3.5" y="11.5" width="5" height="3" fill="#333"/><rect x="7" y="1.8" width="6" height="1" fill="#fff"/><rect x="5" y="3.8" width="6" height="1" fill="#fff"/></svg>
<div class="vl" style="left:100px;top:20px;height:18px;background:#c6c6c6"></div><div class="vl" style="left:101px;top:20px;height:18px;background:#fff"></div>
<svg class="a" style="left:107px;top:18px" width="16" height="16" viewBox="0 0 16 16"><path d="M6 1L9 10M10 1L7 10" stroke="#8a8a8a" stroke-width="1.3"/><circle cx="5.5" cy="12.5" r="2.2" fill="none" stroke="#8a8a8a" stroke-width="1.3"/><circle cx="10.5" cy="12.5" r="2.2" fill="none" stroke="#8a8a8a" stroke-width="1.3"/></svg>
<svg class="a" style="left:130px;top:18px" width="16" height="16" viewBox="0 0 16 16"><path d="M1.5 .5H7L9 2.5V10.5H1.5Z" fill="#fbfbfb" stroke="#8c8c8c"/><path d="M6.5 5.5H12L14.5 8V15.5H6.5Z" fill="#fbfbfb" stroke="#8c8c8c"/><path d="M8 9.5H13M8 11.5H13M8 13.5H13M3 3.5H6M3 5.5H7M3 7.5H6" stroke="#a8a8a8" stroke-width=".8"/></svg>
<svg class="a" style="left:153px;top:18px" width="16" height="16" viewBox="0 0 16 16"><rect x="1.5" y="2.5" width="11" height="12" rx="1" fill="#dcdcdc" stroke="#8c8c8c"/><rect x="5" y=".5" width="4" height="3" fill="#eee" stroke="#8c8c8c" stroke-width=".8"/><path d="M7 8.5H13L15.5 11V15.5H7Z" fill="#fbfbfb" stroke="#8c8c8c"/><path d="M8.5 11H13M8.5 13H14" stroke="#9a9a9a" stroke-width=".8"/></svg>
<div class="vl" style="left:175px;top:20px;height:18px;background:#c6c6c6"></div><div class="vl" style="left:176px;top:20px;height:18px;background:#fff"></div>
<svg class="a" style="left:182px;top:18px" width="16" height="16" viewBox="0 0 16 16"><path d="M5 6C8 1.5 15 4 11 13" fill="none" stroke="#a0a0a0" stroke-width="2.2"/><path d="M2 3.5L2.5 9.5L8 8Z" fill="#a0a0a0"/></svg>
<svg class="a" style="left:205px;top:18px" width="16" height="16" viewBox="0 0 16 16"><path d="M11 6C8 1.5 1 4 5 13" fill="none" stroke="#a0a0a0" stroke-width="2.2"/><path d="M14 3.5L13.5 9.5L8 8Z" fill="#a0a0a0"/></svg>
<div class="vl" style="left:440px;top:18px;height:18px;background:#c6c6c6"></div><div class="vl" style="left:441px;top:18px;height:18px;background:#fff"></div>
<div class="pbtn" style="left:443px;top:16px;width:24px;height:20px"></div>
<svg class="a" style="left:447px;top:18px" width="16" height="16" viewBox="0 0 16 16"><g stroke="#f2487a" stroke-width="2.8" fill="none"><path d="M2.5 2.5L6 6M13.5 2.5L10 6M2.5 13.5L6 10M13.5 13.5L10 10"/></g><g stroke="#ffd0e0" stroke-width=".7" fill="none"><path d="M3.5 3.5L5.5 5.5M12.5 3.5L10.5 5.5M3.5 12.5L5.5 10.5M12.5 12.5L10.5 10.5"/></g><g fill="#e8103a"><circle cx="8" cy="1.3" r=".9"/><circle cx="8" cy="15" r=".9"/><circle cx="1" cy="8" r=".9"/><circle cx="15" cy="8" r=".9"/></g><path d="M8 4.0L12.5 8.5L8 13.0L3.5 8.5Z" fill="url(#gdia)" stroke="#2a4a8a" stroke-width=".6"/><path d="M3.8 8.8L8 13L12.2 8.8" fill="none" stroke="#111" stroke-width="1.3"/></svg>
<svg class="a" style="left:469px;top:17px" width="16" height="16" viewBox="0 0 16 16"><path d="M5.5 0.5L10.0 5L5.5 9.5L1.0 5Z" fill="url(#gdia)" stroke="#2a4a8a" stroke-width=".6"/><path d="M1.0 5.6L5.5 10.3L10.0 5.6" fill="none" stroke="#000" stroke-width="1.6" stroke-dasharray="1.2 .6"/><line x1="9.5" y1="13" x2="14.5" y2="5" stroke="#e7a93a" stroke-width="3.6" stroke-linecap="butt"/><line x1="9.5" y1="13" x2="14.5" y2="5" stroke="#ffe35a" stroke-width="2.2"/><circle cx="14.5" cy="5" r="1.5" fill="#d8245a"/><circle cx="9.5" cy="13" r="1.3" fill="#b0785a"/><rect x="3" y="13.5" width="5" height="1.2" fill="#223"/><rect x="3" y="16.0" width="5" height="1.2" fill="#223"/></svg>
<svg class="a" style="left:492px;top:17px" width="16" height="16" viewBox="0 0 16 16"><line x1="9.5" y1="13" x2="14.5" y2="5" stroke="#e7a93a" stroke-width="3.6" stroke-linecap="butt"/><line x1="9.5" y1="13" x2="14.5" y2="5" stroke="#ffe35a" stroke-width="2.2"/><circle cx="14.5" cy="5" r="1.5" fill="#d8245a"/><circle cx="9.5" cy="13" r="1.3" fill="#b0785a"/><rect x="2" y="13.5" width="7" height="1.2" fill="#223"/><rect x="2" y="16.0" width="7" height="1.2" fill="#223"/></svg>
<svg class="a" style="left:515px;top:17px" width="16" height="16" viewBox="0 0 16 16"><path d="M1 8L7 2L15 8L8 15Z" fill="url(#gdia)" stroke="#2a4a8a" stroke-width=".6"/><path d="M1 8.6L8 15.6L15 8.6" fill="none" stroke="#000" stroke-width="1.6" stroke-dasharray="1.2 .6"/><line x1="8" y1="10" x2="14" y2="2" stroke="#e7a93a" stroke-width="3.6" stroke-linecap="butt"/><line x1="8" y1="10" x2="14" y2="2" stroke="#ffe35a" stroke-width="2.2"/><circle cx="14" cy="2" r="1.5" fill="#d8245a"/><circle cx="8" cy="10" r="1.3" fill="#b0785a"/><rect x="5.5" y="11" width="5" height="1.2" fill="#223"/><rect x="5.5" y="13.5" width="5" height="1.2" fill="#223"/></svg>
<svg class="a" style="left:538px;top:17px" width="16" height="16" viewBox="0 0 16 16"><path d="M1 8L7 2L15 8L8 15Z" fill="url(#gdia)" stroke="#2a4a8a" stroke-width=".6"/><path d="M1 8.6L8 15.6L15 8.6" fill="none" stroke="#000" stroke-width="1.6" stroke-dasharray="1.2 .6"/><path d="M.5 .5H6.5L9 3L6.5 5.5H.5Z" fill="#dde6f4" stroke="#5a6a8a" stroke-width=".8"/><rect x="3" y="2" width="1" height="2.5" fill="#1a3a9a"/><line x1="8" y1="11" x2="14" y2="3" stroke="#e7a93a" stroke-width="3.6" stroke-linecap="butt"/><line x1="8" y1="11" x2="14" y2="3" stroke="#ffe35a" stroke-width="2.2"/><circle cx="14" cy="3" r="1.5" fill="#d8245a"/><circle cx="8" cy="11" r="1.3" fill="#b0785a"/></svg>
<svg class="a" style="left:561px;top:17px" width="16" height="16" viewBox="0 0 16 16"><path d="M1 8L8 1L15 8L8 15Z" fill="url(#gdia)" stroke="#2a4a8a" stroke-width=".6"/><path d="M1 8.6L8 15.6L15 8.6" fill="none" stroke="#000" stroke-width="1.6" stroke-dasharray="1.2 .6"/><path d="M4 5L12 12M8 2.5L3 8M13 7L8 12" stroke="#ffd21a" stroke-width="2" stroke-dasharray="1 .5"/></svg>
<div class="vl" style="left:583px;top:19px;height:18px;background:#c6c6c6"></div><div class="vl" style="left:584px;top:19px;height:18px;background:#fff"></div>
<svg class="a" style="left:590px;top:18px" width="16" height="16" viewBox="0 0 16 16"><path d="M5 .5H11L15.5 5V11L11 15.5H5L.5 11V5Z" fill="#b0b0b0" stroke="#c8c8c8"/><text x="8" y="11" font-family="Liberation Sans" font-size="7" font-weight="bold" fill="#fff" text-anchor="middle" letter-spacing="-.5">STOP</text></svg>
<div class="vl" style="left:612px;top:19px;height:18px;background:#c6c6c6"></div><div class="vl" style="left:613px;top:19px;height:18px;background:#fff"></div>
<svg class="a" style="left:618px;top:18px" width="16" height="16" viewBox="0 0 16 16"><path d="M3 2L14 8.5L3 15Z" fill="url(#gpurp)" stroke="#2a4a7a" stroke-width=".5"/></svg>
<svg class="a" style="left:642px;top:18px" width="16" height="16" viewBox="0 0 16 16"><path d="M1 9L7 14L15 5" fill="none" stroke="#4a7ad8" stroke-width="2.6"/><path d="M1 6L7 9.5L1 13Z" fill="url(#gpurp)"/><path d="M8 4H12M9 2V6" stroke="#2a5ab8" stroke-width="1"/><ellipse cx="12.5" cy="4" rx="2.5" ry="2" fill="#5a8ae0"/></svg>
<div class="vl" style="left:664px;top:19px;height:18px;background:#c6c6c6"></div><div class="vl" style="left:665px;top:19px;height:18px;background:#fff"></div>
<svg class="a" style="left:670px;top:18px" width="16" height="16" viewBox="0 0 16 16"><circle cx="9" cy="9.5" r="6" fill="url(#gclock)" stroke="#e0185a" stroke-width="1.8"/><rect x="7.5" y="1" width="3" height="1.5" fill="#888"/><path d="M9 6V9.5" stroke="#223" stroke-width="1.2"/><path d="M.5 6L8 10L.5 14Z" fill="url(#gpurp)"/></svg>
<svg class="a" style="left:694px;top:18px" width="16" height="16" viewBox="0 0 16 16"><circle cx="8" cy="9.5" r="6" fill="url(#gclock)" stroke="#e0185a" stroke-width="1.8"/><rect x="6.5" y="1" width="3" height="1.5" fill="#888"/><path d="M8 6.5V10.5" stroke="#223" stroke-width="1.3"/></svg>
<div class="vl" style="left:716px;top:19px;height:18px;background:#c6c6c6"></div><div class="vl" style="left:717px;top:19px;height:18px;background:#fff"></div>
<svg class="a" style="left:723px;top:18px" width="16" height="16" viewBox="0 0 16 16"><path d="M.5 4L7 8L.5 12Z" fill="url(#gpurp)"/><rect x="8.5" y=".5" width="5" height="8" fill="#eef2fa" stroke="#4a5a7a" stroke-width=".8"/><path d="M4 15V12H7V15H10V12H13V15" fill="none" stroke="#d01848" stroke-width="1.5"/></svg>
<svg class="a" style="left:746px;top:18px" width="16" height="16" viewBox="0 0 16 16"><path d="M.5 5L7 9L.5 13Z" fill="url(#gpurp)"/><path d="M8 1.5H11.5C14.5 1.5 14.5 7 11.5 7H8Z" fill="#5a8ae0" stroke="#2a4aa0" stroke-width=".6"/><path d="M5 3H8M5 5.5H8" stroke="#2a4aa0"/><path d="M5 15V12H8V15H11V12H14V15" fill="none" stroke="#d01848" stroke-width="1.5"/></svg>
<div class="vl" style="left:768px;top:19px;height:18px;background:#c6c6c6"></div><div class="vl" style="left:769px;top:19px;height:18px;background:#fff"></div>
<svg class="a" style="left:775px;top:18px" width="16" height="16" viewBox="0 0 16 16"><path d="M.5 8L8 1L15.5 8L8 15Z" fill="url(#gdia)" stroke="#2a4a8a" stroke-width=".6"/><path d="M.5 8.6L8 15.6L15.5 8.6" fill="none" stroke="#000" stroke-width="1.6" stroke-dasharray="1.2 .6"/><rect x="4.5" y="1.5" width="7" height="8" fill="#f4f6fb" stroke="#8a96b4" stroke-width=".7"/></svg>
<div class="vl" style="left:797px;top:19px;height:18px;background:#c6c6c6"></div><div class="vl" style="left:798px;top:19px;height:18px;background:#fff"></div>
<svg class="a" style="left:804px;top:18px" width="16" height="16" viewBox="0 0 16 16"><path d="M.5 8L8 1L15.5 8L8 15Z" fill="url(#gdia)" stroke="#2a4a8a" stroke-width=".6"/><path d="M.5 8.6L8 15.6L15.5 8.6" fill="none" stroke="#000" stroke-width="1.6" stroke-dasharray="1.2 .6"/><path d="M2 .5V5H5V9.5H9" fill="none" stroke="#e01848" stroke-width="1.2"/><path d="M4 .5V6M6 .5V8M8 3V10M10 3V10M12 5V10" stroke="#1a2a9a" stroke-width="1.1"/></svg>
<div class="vl" style="left:826px;top:19px;height:18px;background:#c6c6c6"></div><div class="vl" style="left:827px;top:19px;height:18px;background:#fff"></div>
<svg class="a" style="left:833px;top:18px" width="16" height="16" viewBox="0 0 16 16"><rect x="5" y=".5" width="5" height="5" fill="#1aa0f0"/><path d="M7.5 3V8M3 8H12M3 8V10M12 8V10" stroke="#111" stroke-width="1.2" fill="none"/><rect x="1.5" y="9.5" width="5" height="5" fill="#f08a1a"/><rect x="9.5" y="9.5" width="5" height="5" fill="#e01838"/><path d="M0 12H16" stroke="#555" stroke-width=".8"/></svg>
<div class="vl" style="left:855px;top:19px;height:18px;background:#c6c6c6"></div><div class="vl" style="left:856px;top:19px;height:18px;background:#fff"></div>
<svg class="a" style="left:862px;top:18px" width="16" height="16" viewBox="0 0 16 16"><circle cx="8" cy="8" r="7" fill="#7a9ad6" stroke="#b8c8ea" stroke-width="1.2"/><circle cx="8" cy="8" r="5.3" fill="#6a8acc"/><text x="8" y="11.5" font-family="Liberation Sans" font-size="9" font-weight="bold" fill="#fff" text-anchor="middle">?</text></svg>
<div class="vl" style="left:884px;top:19px;height:18px;background:#c6c6c6"></div><div class="vl" style="left:885px;top:19px;height:18px;background:#fff"></div>
<svg class="a" style="left:891px;top:18px" width="16" height="16" viewBox="0 0 16 16"><path d="M2 1.5H14Q15.5 1.5 15.5 3V9Q15.5 10.5 14 10.5H10L7.5 14V10.5H2Q.5 10.5 .5 9V3Q.5 1.5 2 1.5Z" fill="#f4f7fc" stroke="#3a5a8a" stroke-width="1.1"/><path d="M3.5 4.5H12.5M3.5 6.5H12.5M3.5 8.5H9" stroke="#3a5a8a" stroke-width="1.1"/></svg>
<div class="pbtn" style="left:6px;top:42px;width:24px;height:20px"></div>
<svg class="a" style="left:10px;top:44px" width="16" height="16" viewBox="0 0 16 16"><g stroke="#f2487a" stroke-width="2.8" fill="none"><path d="M2.5 2.5L6 6M13.5 2.5L10 6M2.5 13.5L6 10M13.5 13.5L10 10"/></g><g stroke="#ffd0e0" stroke-width=".7" fill="none"><path d="M3.5 3.5L5.5 5.5M12.5 3.5L10.5 5.5M3.5 12.5L5.5 10.5M12.5 12.5L10.5 10.5"/></g><g fill="#e8103a"><circle cx="8" cy="1.3" r=".9"/><circle cx="8" cy="15" r=".9"/><circle cx="1" cy="8" r=".9"/><circle cx="15" cy="8" r=".9"/></g><path d="M8 4.0L12.5 8.5L8 13.0L3.5 8.5Z" fill="url(#gdia)" stroke="#2a4a8a" stroke-width=".6"/><path d="M3.8 8.8L8 13L12.2 8.8" fill="none" stroke="#111" stroke-width="1.3"/></svg>
<svg class="a" style="left:32px;top:44px" width="16" height="16" viewBox="0 0 16 16"><path d="M.5 4.5L4.5 .5L8.5 4.5L4.5 8.5Z" fill="url(#gdia)"/><path d="M.5 4.8L4.5 8.8L8.5 4.8" fill="none" stroke="#111" stroke-width="1.3"/><rect x=".5" y="8.5" width="5.5" height="6.5" fill="url(#ggray)" stroke="#333" stroke-width="1"/><rect x="9.5" y="1.5" width="3" height="3" fill="#f4f4f4" stroke="#333" stroke-width=".9"/><rect x="9" y="4.5" width="4.5" height="3.5" fill="#e8e8e8" stroke="#333" stroke-width=".9"/><rect x="9.5" y="8.5" width="5.5" height="6.5" fill="url(#ggray)" stroke="#333" stroke-width="1"/><rect x="6" y="9.5" width="3.5" height="3" fill="#555"/></svg>
<svg class="a" style="left:55px;top:44px" width="16" height="16" viewBox="0 0 16 16"><rect x=".5" y="2.5" width="14" height="13" fill="url(#gpage)" stroke="#2a4a7a" stroke-width="1"/><rect x="2" y="3.5" width="2" height="2" fill="#4a7ad8"/><rect x="5" y="3.5" width="2" height="2" fill="#f07a10"/><path d="M.5 15.5C4 10 9 4.5 15.5 1C14 7 9 12 .5 15.5Z" fill="#2a4ad0" stroke="#1a2a98" stroke-width=".6"/><path d="M2 14L12 5" stroke="#dfe8ff" stroke-width=".8"/></svg>
<div class="pbtn" style="left:75px;top:42px;width:23px;height:20px"></div>
<svg class="a" style="left:79px;top:44px" width="16" height="16" viewBox="0 0 16 16"><rect x="4.5" y="3.5" width="11" height="12" fill="url(#gyel)" stroke="#4a5a8a" stroke-width=".8"/><circle cx="3.5" cy="3.5" r="3" fill="#7ac07a" stroke="#2a4a6a" stroke-width=".8"/><path d="M5 6L7 8V12" stroke="#2a4a6a" fill="none" stroke-width=".8"/></svg>
<div class="pbtn" style="left:99px;top:42px;width:23px;height:20px"></div>
<svg class="a" style="left:103px;top:44px" width="16" height="16" viewBox="0 0 16 16"><rect x=".5" y="1.5" width="15" height="5" fill="#cfdaf0" stroke="#4a5a7a" stroke-width=".8"/><rect x="1.5" y="2.5" width="8" height="3" fill="#4aa84a"/><rect x=".5" y="8.5" width="15" height="5" fill="#cfdaf0" stroke="#4a5a7a" stroke-width=".8"/><rect x="1.5" y="9.5" width="4" height="3" fill="#4aa84a"/><path d="M0 15.2H16" stroke="#2a3ab8" stroke-width="1.4" stroke-dasharray="1 1"/></svg>
<svg class="a" style="left:124px;top:44px" width="16" height="16" viewBox="0 0 16 16"><path d="M3 7C4 2 11 1 13 5" fill="none" stroke="#e8305a" stroke-width="3"/><path d="M10.5 6L15.5 6L13.5 1Z" fill="#e8305a"/><path d="M13 9C12 14 5 15 3 11" fill="none" stroke="#6a8ad0" stroke-width="3"/><path d="M5.5 10L.5 10L2.5 15Z" fill="#6a8ad0"/></svg>
<div class="pbtn" style="left:144px;top:42px;width:24px;height:20px"></div>
<svg class="a" style="left:148px;top:44px" width="16" height="16" viewBox="0 0 16 16"><path d="M2.5 .5H11L14.5 4V15.5H2.5Z" fill="url(#gpage)" stroke="#2a4a7a" stroke-width=".8"/><path d="M5 3.5H10M5 5.5H10M5 7.5H9" stroke="#2a3a6a" stroke-width=".9"/><path d="M2 10L6 14L15 5" fill="none" stroke="#3aa83a" stroke-width="2.6"/></svg>
<svg class="a" style="left:339px;top:70px" width="9" height="10" viewBox="0 0 9 10"><path d="M2.5 .5H6.5V5.5H7.5V6.5H1.5V5.5H2.5Z" fill="none" stroke="#000" stroke-width="1"/><path d="M4.5 6.5V10" stroke="#000"/></svg>
<svg class="a" style="left:351px;top:70px" width="10" height="10" viewBox="0 0 10 10"><rect x="3.5" y=".5" width="6" height="5" fill="none" stroke="#000"/><rect x="3.5" y=".5" width="6" height="1.5" fill="#000"/><rect x=".5" y="3.5" width="6" height="6" fill="#f0f0f0" stroke="#000"/><rect x=".5" y="3.5" width="6" height="1.5" fill="#000"/></svg>
<svg class="a" style="left:365px;top:70px" width="10" height="10" viewBox="0 0 10 10"><path d="M1 1L9 9M9 1L1 9" stroke="#000" stroke-width="1.5"/></svg>
<svg class="a" style="left:339px;top:548px" width="9" height="10" viewBox="0 0 9 10"><path d="M2.5 .5H6.5V5.5H7.5V6.5H1.5V5.5H2.5Z" fill="none" stroke="#000" stroke-width="1"/><path d="M4.5 6.5V10" stroke="#000"/></svg>
<svg class="a" style="left:351px;top:548px" width="10" height="10" viewBox="0 0 10 10"><rect x="3.5" y=".5" width="6" height="5" fill="none" stroke="#000"/><rect x="3.5" y=".5" width="6" height="1.5" fill="#000"/><rect x=".5" y="3.5" width="6" height="6" fill="#f0f0f0" stroke="#000"/><rect x=".5" y="3.5" width="6" height="1.5" fill="#000"/></svg>
<svg class="a" style="left:365px;top:548px" width="10" height="10" viewBox="0 0 10 10"><path d="M1 1L9 9M9 1L1 9" stroke="#000" stroke-width="1.5"/></svg>
<svg class="a" style="left:339px;top:702px" width="9" height="10" viewBox="0 0 9 10"><path d="M2.5 .5H6.5V5.5H7.5V6.5H1.5V5.5H2.5Z" fill="none" stroke="#000" stroke-width="1"/><path d="M4.5 6.5V10" stroke="#000"/></svg>
<svg class="a" style="left:351px;top:702px" width="10" height="10" viewBox="0 0 10 10"><rect x="3.5" y=".5" width="6" height="5" fill="none" stroke="#000"/><rect x="3.5" y=".5" width="6" height="1.5" fill="#000"/><rect x=".5" y="3.5" width="6" height="6" fill="#f0f0f0" stroke="#000"/><rect x=".5" y="3.5" width="6" height="1.5" fill="#000"/></svg>
<svg class="a" style="left:365px;top:702px" width="10" height="10" viewBox="0 0 10 10"><path d="M1 1L9 9M9 1L1 9" stroke="#000" stroke-width="1.5"/></svg>
<svg class="a" style="left:1px;top:111px" width="17" height="15" viewBox="0 0 17 15"><path d="M8 .5L16.5 9.5L12.5 14.5H.5Z" fill="#b86a18"/><path d="M8 .5L12.5 14.5H.5Z" fill="url(#gtri)" stroke="#5a6a9a" stroke-width=".7"/><g fill="#1a3aa0"><rect x="6.5" y="6" width="1.2" height="1.2"/><rect x="5.5" y="8.5" width="1.2" height="1.2"/><rect x="7.5" y="8.5" width="1.2" height="1.2"/><rect x="4.5" y="11" width="1.2" height="1.2"/><rect x="8.5" y="11" width="1.2" height="1.2"/></g><g fill="#e01838"><rect x="6.5" y="4.5" width="1.2" height="1.5"/><rect x="6.5" y="11" width="1.2" height="1.2"/></g></svg>
<svg class="a" style="left:6px;top:136px" width="8" height="8" viewBox="0 0 8 8"><path d="M6.5 .5V6.5H.5Z" fill="#333" stroke="#222" stroke-width=".6"/></svg>
<svg class="a" style="left:22px;top:131px" width="14" height="17" viewBox="0 0 14 17"><rect x=".5" y=".5" width="13" height="10" fill="#dfe8f8" stroke="#506070" stroke-width="1"/><path d="M1 3.5H4M1 5.5H4M1 7.5H4M10.5 5.5H13" stroke="#8aa0c8" stroke-width=".8"/><path d="M4 2H7.5C10.5 2 10.5 9 7.5 9H4Z" fill="#7aa0e0" stroke="#7088b0" stroke-width=".6"/><text x="7" y="16.5" font-family="Liberation Sans" font-size="6.5" font-weight="bold" fill="#2a5ad0" text-anchor="middle" letter-spacing=".3">BDF</text></svg>
<svg class="a" style="left:90px;top:130px" width="16" height="15" viewBox="0 0 16 15"><rect x="3" y=".3" width="5" height="3" fill="#3a4a6a"/><rect x="4" y="1.2" width="3" height="1.2" fill="#e8103a"/><path d="M5.5 3V5M1.8 8V5H10.3V8" stroke="#2a3a5a" stroke-width="1" fill="none"/><rect x="0" y="8" width="5" height="3" fill="#3a4a6a"/><rect x="1" y="9" width="3" height="1.2" fill="#f0d840"/><rect x="6.5" y="7.5" width="8.5" height="7" fill="none" stroke="#e8103a" stroke-width="1.1"/><rect x="8" y="9" width="5" height="3" fill="#3a4a6a"/><rect x="9" y="10" width="3" height="1.2" fill="#60b040"/></svg>
<svg class="a" style="left:42px;top:151px" width="14" height="16" viewBox="0 0 14 16"><rect x=".5" y=".5" width="13" height="9" fill="#dde5f0" stroke="#6a7a9a" stroke-width=".8"/><text x="1" y="8" font-family="Liberation Sans" font-size="7.5" fill="#222">abd</text><path d="M1 9V15" stroke="#2a5ad8" stroke-width="1"/></svg>
<svg class="a" style="left:42px;top:171px" width="14" height="16" viewBox="0 0 14 16"><rect x=".5" y=".5" width="13" height="9" fill="#dde5f0" stroke="#6a7a9a" stroke-width=".8"/><text x="1" y="8" font-family="Liberation Sans" font-size="7.5" fill="#222">abd</text><path d="M1 9V15" stroke="#2a5ad8" stroke-width="1"/></svg>
<svg class="a" style="left:42px;top:191px" width="14" height="16" viewBox="0 0 14 16"><rect x=".5" y=".5" width="13" height="9" fill="#7aaef0" stroke="#6a7a9a" stroke-width=".8"/><text x="1" y="8" font-family="Liberation Sans" font-size="7.5" fill="#222">abd</text><path d="M1 9V15" stroke="#2a5ad8" stroke-width="1"/></svg>
<svg class="a" style="left:4px;top:500px" width="5" height="8" viewBox="0 0 5 8"><path d="M4 0V8L0 4Z" fill="#333"/></svg>
<svg class="a" style="left:368px;top:500px" width="5" height="8" viewBox="0 0 5 8"><path d="M0 0V8L4 4Z" fill="#555"/></svg>
<svg class="a" style="left:49px;top:500px" width="6" height="8" viewBox="0 0 6 8"><path d="M.5 0V8M3 0V8M5.5 0V8" stroke="#555"/></svg>
<svg class="a" style="left:8px;top:517px" width="17" height="15" viewBox="0 0 17 15"><path d="M8 .5L16.5 9.5L12.5 14.5H.5Z" fill="#b86a18"/><path d="M8 .5L12.5 14.5H.5Z" fill="url(#gtri)" stroke="#5a6a9a" stroke-width=".7"/><g fill="#1a3aa0"><rect x="6.5" y="6" width="1.2" height="1.2"/><rect x="5.5" y="8.5" width="1.2" height="1.2"/><rect x="7.5" y="8.5" width="1.2" height="1.2"/><rect x="4.5" y="11" width="1.2" height="1.2"/><rect x="8.5" y="11" width="1.2" height="1.2"/></g><g fill="#e01838"><rect x="6.5" y="4.5" width="1.2" height="1.5"/><rect x="6.5" y="11" width="1.2" height="1.2"/></g></svg>
<svg class="a" style="left:100px;top:517px" width="13" height="16" viewBox="0 0 13 16"><path d="M.5 .5H9L12.5 4V15.5H.5Z" fill="#eef2fb" stroke="#2a3a7a" stroke-width=".8"/><path d="M2 4.5H9M2 6.5H11M2 8.5H11M2 10.5H11M2 12.5H11" stroke="#1a2ab8" stroke-width="1"/></svg>
<svg class="a" style="left:165px;top:519px" width="12" height="12" viewBox="0 0 12 12"><rect x="7" y=".5" width="4.5" height="4.5" fill="#8aaae0" stroke="#5a6a9a" stroke-width=".6"/><rect x="4" y="3.5" width="4.5" height="4.5" fill="#f8d030" stroke="#8a7a3a" stroke-width=".6"/><rect x=".5" y="6.5" width="4.5" height="5" fill="#eef2fa" stroke="#5a6a9a" stroke-width=".6"/></svg>
<svg class="a" style="left:266px;top:517px" width="16" height="16" viewBox="0 0 16 16"><path d="M7 7L15 15" stroke="#3a5ad8" stroke-width="2.4"/><path d="M6 6L8.5 8.5" stroke="#f8e040" stroke-width="2.6"/><g fill="#e04020"><rect x="1" y="2" width="1.5" height="1.5"/><rect x="7" y="1" width="1.5" height="1.5"/><rect x="3" y="5" width="1.5" height="1.5"/><rect x="10" y="4" width="1.5" height="1.5"/><rect x="1" y="8" width="1.5" height="1.5"/></g></svg>
<div class="a" style="left:350px;top:515px;width:16px;height:24px;border:1px solid #9a9a9a;border-top-color:#fff;border-left-color:#fff;background:#f0f0f0"></div><div class="a" style="left:366px;top:515px;width:16px;height:24px;border:1px solid #858585;border-top-color:#fff;border-left-color:#fff;background:#f0f0f0"></div>
<svg class="a" style="left:355px;top:521px" width="6" height="11" viewBox="0 0 6 11"><path d="M6 0V11L0 5.5Z" fill="#a8a8a8"/></svg>
<svg class="a" style="left:371px;top:521px" width="6" height="11" viewBox="0 0 6 11"><path d="M0 0V11L6 5.5Z" fill="#000"/></svg>
<svg class="a" style="left:46px;top:629px" width="6" height="9" viewBox="0 0 6 9"><path d="M.5 .5L5.5 4.5L.5 8.5Z" fill="#fff" stroke="#888" stroke-width=".9"/></svg>
<svg class="a" style="left:61px;top:625px" width="14" height="14" viewBox="0 0 14 14"><path d="M.5 1.5H5L6 3H13.5V13.5H.5Z" fill="url(#gfold)" stroke="#6a6a5a" stroke-width=".8"/><path d="M1 4.5H13" stroke="#fff7c0" stroke-width=".8"/></svg>
<svg class="a" style="left:46px;top:649px" width="6" height="9" viewBox="0 0 6 9"><path d="M.5 .5L5.5 4.5L.5 8.5Z" fill="#fff" stroke="#888" stroke-width=".9"/></svg>
<svg class="a" style="left:61px;top:645px" width="14" height="14" viewBox="0 0 14 14"><path d="M.5 1.5H5L6 3H13.5V13.5H.5Z" fill="url(#gfold)" stroke="#6a6a5a" stroke-width=".8"/><path d="M1 4.5H13" stroke="#fff7c0" stroke-width=".8"/></svg>
<svg class="a" style="left:46px;top:669px" width="6" height="9" viewBox="0 0 6 9"><path d="M.5 .5L5.5 4.5L.5 8.5Z" fill="#fff" stroke="#888" stroke-width=".9"/></svg>
<svg class="a" style="left:61px;top:665px" width="14" height="14" viewBox="0 0 14 14"><path d="M.5 1.5H5L6 3H13.5V13.5H.5Z" fill="url(#gfold)" stroke="#6a6a5a" stroke-width=".8"/><path d="M1 4.5H13" stroke="#fff7c0" stroke-width=".8"/></svg>
<svg class="a" style="left:304px;top:604px" width="11" height="13" viewBox="0 0 11 13"><circle cx="5.5" cy="7.5" r="5" fill="#c8d6f4" stroke="#4a6ac0" stroke-width="1.1"/><rect x="4.5" y=".5" width="2" height="2" fill="none" stroke="#4a6ac0" stroke-width=".8"/><path d="M5.5 4.5V8.5L6.5 9.5" stroke="#2a4aa0" fill="none"/></svg>
<svg class="a" style="left:204px;top:723px" width="11" height="13" viewBox="0 0 11 13"><circle cx="5.5" cy="7.5" r="5" fill="#c8d6f4" stroke="#4a6ac0" stroke-width="1.1"/><rect x="4.5" y=".5" width="2" height="2" fill="none" stroke="#4a6ac0" stroke-width=".8"/><path d="M5.5 4.5V8.5L6.5 9.5" stroke="#2a4aa0" fill="none"/></svg>
<svg class="a" style="left:369px;top:605px" width="8" height="6" viewBox="0 0 8 6"><path d="M0 5L4 0L8 5Z" fill="#444"/></svg>
<svg class="a" style="left:369px;top:665px" width="8" height="6" viewBox="0 0 8 6"><path d="M0 0L4 5L8 0Z" fill="#555"/></svg>
<svg class="a" style="left:4px;top:680px" width="5" height="8" viewBox="0 0 5 8"><path d="M4 0V8L0 4Z" fill="#333"/></svg>
<svg class="a" style="left:354px;top:680px" width="5" height="8" viewBox="0 0 5 8"><path d="M0 0V8L4 4Z" fill="#555"/></svg>
<svg class="a" style="left:165px;top:680px" width="6" height="8" viewBox="0 0 6 8"><path d="M.5 0V8M3 0V8M5.5 0V8" stroke="#555"/></svg>
<svg class="a" style="left:103px;top:723px" width="13" height="14" viewBox="0 0 13 14"><text x="6" y="11" font-family="Liberation Sans" font-size="13" font-style="italic" fill="#3a5ac8" text-anchor="middle">%</text></svg>
<svg class="a" style="left:392px;top:803px" width="5" height="8" viewBox="0 0 5 8"><path d="M4 0V8L0 4Z" fill="#333"/></svg>
<svg class="a" style="left:468px;top:803px" width="6" height="8" viewBox="0 0 6 8"><path d="M.5 0V8M3 0V8M5.5 0V8" stroke="#555"/></svg>
<svg class="a" style="left:401px;top:69px" width="16" height="16" viewBox="0 0 16 16"><path d="M3.5 .5H10L13.5 4V15.5H3.5Z" fill="#e4ecf8" stroke="#3a5a9a" stroke-width=".8"/><path d="M.5 4H4M.5 6H4" stroke="#7a9ad0" stroke-width=".8"/><path d="M4 3H8.5A2.5 2.5 0 0 1 8.5 8H4Z" fill="#7aa2e8" stroke="#3a5a9a" stroke-width=".6"/><rect x="6.5" y="9.5" width="5" height="4" fill="#fff" stroke="#3a5a9a" stroke-width=".7"/><path d="M9 3V9.5" stroke="#3a5a9a" stroke-width=".6"/></svg>
<svg class="a" style="left:704px;top:68px" width="17" height="17" viewBox="0 0 17 17"><path d="M8 1L16 8.5L8 16L0 8.5Z" fill="url(#gdia)"/><path d="M1.2 10L8 16.6L14.8 10" fill="none" stroke="#000" stroke-width="2" stroke-dasharray="2 .6"/><text x="0" y="11" font-family="Liberation Sans" font-size="10.5" fill="#ffb818" stroke="#3a2a10" stroke-width=".2" letter-spacing="-.5">abc</text></svg>
<svg class="a" style="left:1010px;top:68px" width="17" height="17" viewBox="0 0 17 17"><path d="M8 1L16 8.5L8 16L0 8.5Z" fill="url(#gdia)"/><path d="M1.2 10L8 16.6L14.8 10" fill="none" stroke="#000" stroke-width="2" stroke-dasharray="2 .6"/><text x="0" y="11" font-family="Liberation Sans" font-size="10.5" fill="#ffb818" stroke="#3a2a10" stroke-width=".2" letter-spacing="-.5">abc</text></svg>
<svg class="a" style="left:1316px;top:67px" width="17" height="17" viewBox="0 0 17 17"><path d="M8 1L16 8.5L8 16L0 8.5Z" fill="url(#gdia)"/><path d="M1.2 10L8 16.6L14.8 10" fill="none" stroke="#000" stroke-width="2" stroke-dasharray="2 .6"/><text x="0" y="11" font-family="Liberation Sans" font-size="10.5" fill="#ffb818" stroke="#3a2a10" stroke-width=".2" letter-spacing="-.5">abc</text></svg>
<svg class="a" style="left:664px;top:71px" width="14" height="14" viewBox="0 0 14 14"><rect x="1" y="1" width="12" height="12" rx="1.5" fill="#d2d2d2" stroke="#a8a8a8" stroke-width="1.4"/><path d="M4.5 4.5L9.5 9.5M9.5 4.5L4.5 9.5" stroke="#fff" stroke-width="2"/></svg>
<svg class="a" style="left:970px;top:71px" width="14" height="14" viewBox="0 0 14 14"><rect x="1" y="1" width="12" height="12" rx="1.5" fill="#d2d2d2" stroke="#a8a8a8" stroke-width="1.4"/><path d="M4.5 4.5L9.5 9.5M9.5 4.5L4.5 9.5" stroke="#fff" stroke-width="2"/></svg>
<svg class="a" style="left:1276px;top:71px" width="14" height="14" viewBox="0 0 14 14"><rect x="1" y="1" width="12" height="12" rx="1.5" fill="#d2d2d2" stroke="#a8a8a8" stroke-width="1.4"/><path d="M4.5 4.5L9.5 9.5M9.5 4.5L4.5 9.5" stroke="#fff" stroke-width="2"/></svg>
<svg class="a" style="left:1582px;top:70px" width="14" height="14" viewBox="0 0 14 14"><rect x="1" y="1" width="12" height="12" rx="1.5" fill="#e87a50" stroke="#e03020" stroke-width="1.6"/><path d="M4.5 4.5L9.5 9.5M9.5 4.5L4.5 9.5" stroke="#fff" stroke-width="2"/></svg>
<div class="grip" style="left:389px;top:93px;height:17px"></div>
<svg class="a" style="left:399px;top:94px" width="16" height="16" viewBox="0 0 16 16"><rect x=".5" y=".5" width="15" height="10" fill="#eef2fa" stroke="#3a5ab0" stroke-width=".8"/><rect x=".5" y=".5" width="15" height="1.8" fill="#2a4ac0"/><rect x="1.5" y="5" width="6" height="4" fill="#d0d8e8" stroke="#778"  stroke-width=".6"/><rect x="6.5" y="9.5" width="8" height="6" fill="#2a4aa0"/><rect x="8" y="11" width="5" height="3" fill="#fff"/><path d="M8 4C9 2 12 2 12 5V8" fill="none" stroke="#e01848" stroke-width="1.1"/><path d="M10 7H14L12 9.5Z" fill="#e01848"/></svg>
<div class="vl" style="left:421px;top:95px;height:17px;background:#c6c6c6"></div><div class="vl" style="left:422px;top:95px;height:17px;background:#fff"></div>
<svg class="a" style="left:427px;top:94px" width="16" height="16" viewBox="0 0 16 16"><rect x="1" y="6" width="6" height="9" rx="1" fill="url(#ggray)" stroke="#444" stroke-width=".7"/><rect x="9" y="6" width="6" height="9" rx="1" fill="url(#ggray)" stroke="#444" stroke-width=".7"/><rect x="2.5" y="1" width="3" height="5" rx="1" fill="#999" stroke="#444" stroke-width=".6"/><rect x="10.5" y="1" width="3" height="5" rx="1" fill="#999" stroke="#444" stroke-width=".6"/><rect x="6" y="7" width="4" height="3" fill="#555"/></svg>
<svg class="a" style="left:451px;top:94px" width="16" height="16" viewBox="0 0 16 16"><text x="0" y="8" font-family="Liberation Sans" font-size="9" font-weight="bold" fill="#1a4ab0">A</text><text x="9" y="15.5" font-family="Liberation Sans" font-size="8" font-weight="bold" fill="#6a6a6a">B</text><path d="M1.5 10Q2 15 8 14.5M9 6Q11 3 13 1.5" fill="none" stroke="#2a5ad8" stroke-width="1" stroke-dasharray="1 1"/><path d="M8 12.5L10 14.5L8 16Z" fill="#2a5ad8"/></svg>
<svg class="a" style="left:475px;top:94px" width="16" height="16" viewBox="0 0 16 16"><path d="M2 4H12" stroke="#2a5ad8" stroke-width="2.4"/><path d="M11 .5L15.5 4L11 7.5Z" fill="#2a5ad8"/><text x="1" y="15" font-family="Liberation Sans" font-size="8.5" fill="#3a4a6a">{ }</text></svg>
<div class="vl" style="left:496px;top:95px;height:17px;background:#c6c6c6"></div><div class="vl" style="left:497px;top:95px;height:17px;background:#fff"></div>
<svg class="a" style="left:503px;top:94px" width="16" height="16" viewBox="0 0 16 16"><path d="M7 3H16M9 6H16M9 9H16M7 12H16" stroke="#2a4a8a" stroke-width="1.2"/><path d="M1 7.5H6" stroke="#3a7ae8" stroke-width="1.2"/><path d="M5 5L8 7.5L5 10Z" fill="#3a7ae8"/><path d="M7 1V16" stroke="#5a6a9a" stroke-width=".7" stroke-dasharray="1 1"/></svg>
<svg class="a" style="left:526px;top:94px" width="16" height="16" viewBox="0 0 16 16"><path d="M7 3H16M9 6H16M9 9H16M7 12H16" stroke="#2a4a8a" stroke-width="1.2"/><path d="M3 7.5H8" stroke="#3a7ae8" stroke-width="1.2"/><path d="M4 5L1 7.5L4 10Z" fill="#3a7ae8"/><path d="M7 1V16" stroke="#5a6a9a" stroke-width=".7" stroke-dasharray="1 1"/></svg>
<div class="vl" style="left:548px;top:95px;height:17px;background:#c6c6c6"></div><div class="vl" style="left:549px;top:95px;height:17px;background:#fff"></div>
<svg class="a" style="left:556px;top:94px" width="16" height="16" viewBox="0 0 16 16"><path d="M3.5 4.5H9L11.5 7V15.5H3.5Z" fill="url(#gpage)" stroke="#2a4a7a" stroke-width=".8"/><path d="M1 15V4Q1 1 4.5 1Q8 1 8 4V9L5 7L3 9Z" fill="url(#ggreen)" stroke="#1a6a2a" stroke-width=".7"/></svg>
<svg class="a" style="left:578px;top:94px" width="16" height="16" viewBox="0 0 16 16"><path d="M3.5 4.5H9L11.5 7V15.5H3.5Z" fill="url(#gpage)" stroke="#2a4a7a" stroke-width=".8"/><path d="M1 15V4Q1 1 4.5 1Q8 1 8 4V9L5 7L3 9Z" fill="url(#ggreen)" stroke="#1a6a2a" stroke-width=".7"/><path d="M9 5Q10 0 14 3" fill="none" stroke="#2a5ad8" stroke-width="1.3"/><path d="M12 4.5L16 4L14 1Z" fill="#2a5ad8"/></svg>
<svg class="a" style="left:601px;top:94px" width="16" height="16" viewBox="0 0 16 16"><path d="M5.5 4.5H11L13.5 7V15.5H5.5Z" fill="url(#gpage)" stroke="#2a4a7a" stroke-width=".8"/><path d="M3 15V4Q3 1 6.5 1Q10 1 10 4V9L7 7L5 9Z" fill="url(#ggreen)" stroke="#1a6a2a" stroke-width=".7"/><path d="M7 3Q5 -1 2 2.5" fill="none" stroke="#2a5ad8" stroke-width="1.3"/><path d="M0 2L4 2.5L2 5Z" fill="#2a5ad8"/></svg>
<svg class="a" style="left:623px;top:94px" width="16" height="16" viewBox="0 0 16 16"><path d="M3.5 4.5H9L11.5 7V15.5H3.5Z" fill="url(#gpage)" stroke="#2a4a7a" stroke-width=".8"/><path d="M1 15V4Q1 1 4.5 1Q8 1 8 4V9L5 7L3 9Z" fill="url(#ggreen)" stroke="#1a6a2a" stroke-width=".7"/><path d="M9 10L15 16M15 10L9 16" stroke="#f04848" stroke-width="2"/></svg>
<svg class="a" style="left:646px;top:94px" width="17" height="16" viewBox="0 0 17 16"><path d="M6.5 1.5H11L13.5 4V12.5H6.5Z" fill="url(#gpage)" stroke="#5a6a9a" stroke-width=".6"/><path d="M3.5 4.5H9L11.5 7V15.5H3.5Z" fill="url(#gpage)" stroke="#2a4a7a" stroke-width=".8"/><path d="M1 15V4Q1 1 4.5 1Q8 1 8 4V9L5 7L3 9Z" fill="url(#ggreen)" stroke="#1a6a2a" stroke-width=".7"/><path d="M10 10L16 16M16 10L10 16" stroke="#f04848" stroke-width="2"/></svg>
<div class="vl" style="left:669px;top:95px;height:17px;background:#c6c6c6"></div><div class="vl" style="left:670px;top:95px;height:17px;background:#fff"></div>
<svg class="a" style="left:677px;top:94px" width="9" height="16" viewBox="0 0 9 16"><path d="M4 15Q1 15 1 12V4Q1 1 4 1Q7 1 7 4V12Q7 13.5 5.5 13.5Q4 13.5 4 12V5" fill="none" stroke="#2a4a7a" stroke-width="1.1"/></svg>
<svg class="a" style="left:699px;top:94px" width="16" height="16" viewBox="0 0 16 16"><path d="M2 2H12L15 13H5Z" fill="#cabea0" stroke="#6a4030" stroke-width="1"/><path d="M1 3Q1 1 3 1H12Q14 1 14 3" fill="#dcd0b0" stroke="#6a4030" stroke-width="1"/><path d="M5 13Q4 15.5 6 15H15" fill="none" stroke="#6a4030" stroke-width="1"/></svg>
<div class="vl" style="left:721px;top:95px;height:17px;background:#c6c6c6"></div><div class="vl" style="left:722px;top:95px;height:17px;background:#fff"></div>
<svg class="a" style="left:728px;top:94px" width="16" height="16" viewBox="0 0 16 16"><path d="M3.5 .5H12L15.5 4V15.5H3.5Z" fill="url(#gpage)" stroke="#2a4a7a" stroke-width=".8"/><path d="M1 9L6 14L15 5" fill="none" stroke="#4a7ad8" stroke-width="2.6"/><path d="M1 1L8 4.5L1 8Z" fill="url(#gpurp)"/></svg>
<div class="vl" style="left:750px;top:95px;height:17px;background:#c6c6c6"></div><div class="vl" style="left:751px;top:95px;height:17px;background:#fff"></div>
<div class="pbtn" style="left:754px;top:92px;width:23px;height:20px"></div>
<div class="t" style="left:756px;top:93px;font-size:9.5px;line-height:8.5px;color:#2a3a5a;text-align:center;width:19px;-webkit-text-stroke:0">267<br>268</div>
<div class="t" style="left:780px;top:96px;font-size:10px;color:#2a4ac0;letter-spacing:-.3px;-webkit-text-stroke:0">ab/</div>
<div class="vl" style="left:810px;top:95px;height:17px;background:#3a4a8a"></div>
<svg class="a" style="left:826px;top:94px" width="15" height="16" viewBox="0 0 15 16"><path d="M1 6H10" stroke="#2a5ad8" stroke-width="2.2"/><path d="M9 2.5L14 6L9 9.5Z" fill="#2a5ad8"/><path d="M1 13H14" stroke="#333" stroke-width="1" stroke-dasharray="1 2"/></svg>
<svg class="a" style="left:849px;top:94px" width="16" height="16" viewBox="0 0 16 16"><rect x=".5" y=".5" width="15" height="15" fill="url(#gpage)" stroke="#3a4a6a" stroke-width=".9"/><path d="M2 3.5H4M6 3.5H13M6 12.5H13" stroke="#111" stroke-width="1"/><path d="M6 6.5H13M8 9.5H13" stroke="#9aa" stroke-width="1"/></svg>
<svg class="a" style="left:872px;top:94px" width="16" height="16" viewBox="0 0 16 16"><rect x=".5" y=".5" width="15" height="15" fill="url(#gpage)" stroke="#3a4a6a" stroke-width=".9"/><path d="M6 3.5H13M6 12.5H13" stroke="#111" stroke-width="1"/><path d="M6 6.5H13M8 9.5H13" stroke="#9aa" stroke-width="1"/><path d="M4 6Q2 1 0 3" fill="none" stroke="#2a5ad8" stroke-width="1.2"/></svg>
<svg class="a" style="left:895px;top:94px" width="16" height="16" viewBox="0 0 16 16"><rect x=".5" y="1.5" width="15" height="14" fill="#eef2fa" stroke="#3a5aa0" stroke-width=".9"/><path d="M2 4.5H7" stroke="#5a6a9a" stroke-dasharray="1 1"/><path d="M9 4.5H14" stroke="#f08a1a" stroke-width="1.2"/><path d="M3 8.5H7M3 11.5H13M3 13.5H9" stroke="#3a5aa0" stroke-width="1"/></svg>

</body></html>
